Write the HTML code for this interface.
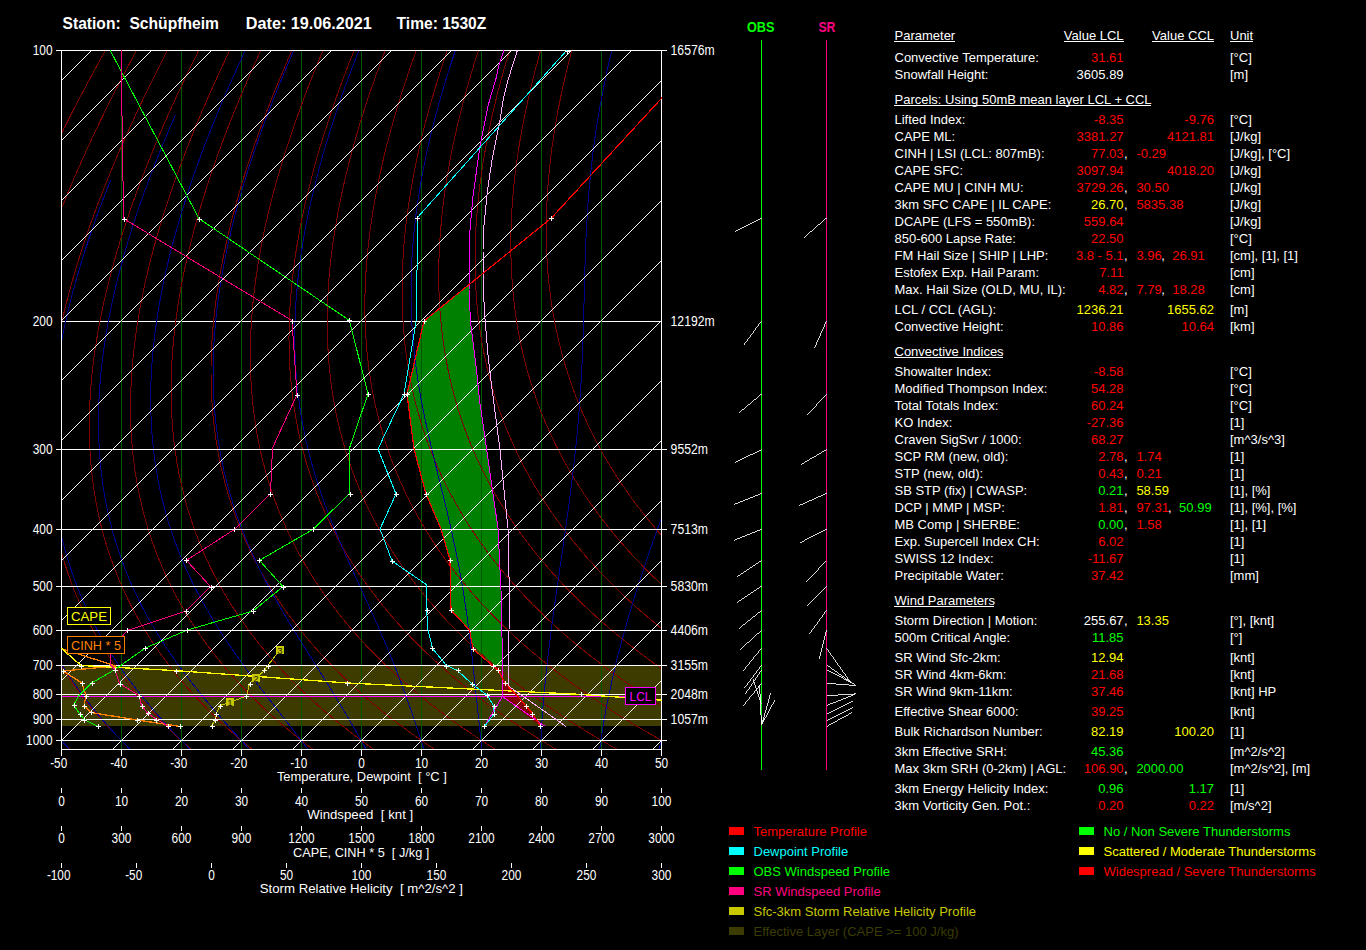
<!DOCTYPE html><html><head><meta charset="utf-8"><style>
html,body{margin:0;padding:0;background:#000;width:1366px;height:950px;overflow:hidden}
svg text{font-family:"Liberation Sans",sans-serif;white-space:pre}
</style></head><body>
<svg width="1366" height="950" viewBox="0 0 1366 950" style="position:absolute;left:0;top:0">
<defs><clipPath id="pc"><rect x="61" y="50" width="601" height="700"/></clipPath><pattern id="iso" patternUnits="userSpaceOnUse" x="0" y="0" width="60" height="60"><path d="M0,21 h1 v1 h-1 z M1,20 h1 v1 h-1 z M2,19 h1 v1 h-1 z M3,18 h1 v1 h-1 z M4,17 h1 v1 h-1 z M5,16 h1 v1 h-1 z M6,15 h1 v1 h-1 z M7,14 h1 v1 h-1 z M8,13 h1 v1 h-1 z M9,12 h1 v1 h-1 z M10,11 h1 v1 h-1 z M11,10 h1 v1 h-1 z M12,9 h1 v1 h-1 z M13,8 h1 v1 h-1 z M14,7 h1 v1 h-1 z M15,6 h1 v1 h-1 z M16,5 h1 v1 h-1 z M17,4 h1 v1 h-1 z M18,3 h1 v1 h-1 z M19,2 h1 v1 h-1 z M20,1 h1 v1 h-1 z M21,0 h1 v1 h-1 z M22,59 h1 v1 h-1 z M23,58 h1 v1 h-1 z M24,57 h1 v1 h-1 z M25,56 h1 v1 h-1 z M26,55 h1 v1 h-1 z M27,54 h1 v1 h-1 z M28,53 h1 v1 h-1 z M29,52 h1 v1 h-1 z M30,51 h1 v1 h-1 z M31,50 h1 v1 h-1 z M32,49 h1 v1 h-1 z M33,48 h1 v1 h-1 z M34,47 h1 v1 h-1 z M35,46 h1 v1 h-1 z M36,45 h1 v1 h-1 z M37,44 h1 v1 h-1 z M38,43 h1 v1 h-1 z M39,42 h1 v1 h-1 z M40,41 h1 v1 h-1 z M41,40 h1 v1 h-1 z M42,39 h1 v1 h-1 z M43,38 h1 v1 h-1 z M44,37 h1 v1 h-1 z M45,36 h1 v1 h-1 z M46,35 h1 v1 h-1 z M47,34 h1 v1 h-1 z M48,33 h1 v1 h-1 z M49,32 h1 v1 h-1 z M50,31 h1 v1 h-1 z M51,30 h1 v1 h-1 z M52,29 h1 v1 h-1 z M53,28 h1 v1 h-1 z M54,27 h1 v1 h-1 z M55,26 h1 v1 h-1 z M56,25 h1 v1 h-1 z M57,24 h1 v1 h-1 z M58,23 h1 v1 h-1 z M59,22 h1 v1 h-1 z" fill="#fff" shape-rendering="crispEdges"/></pattern></defs>
<g clip-path="url(#pc)">
<line x1="56" y1="321.5" x2="667" y2="321.5" stroke="#fff" shape-rendering="crispEdges"/>
<polygon points="469,285 424,321 407,394 414,449 426,494 441,529 450,560 451,610 469.5,630 473,649 493,666 502.5,675 502.5,666 502.5,660 501,590 498,528 493,494 485,438 479.5,400 476.5,370 470.5,322 469,290" fill="#008000"/>
<rect x="61" y="666" width="600" height="60" fill="#3d3b00"/>
<polygon points="502.5,675 505,683 516,694.5 525.5,705.5 532.5,713.5 539,724 541,726 540,726 502.5,696.5" fill="#800000"/>
<path d="M121.5,50 V749 M181.5,50 V749 M241.5,50 V749 M301.5,50 V749 M361.5,50 V749 M421.5,50 V749 M481.5,50 V749 M541.5,50 V749 M601.5,50 V749" stroke="#005800" fill="none" shape-rendering="crispEdges"/>
<path d="M118.8,26.7 L105.6,50.0 L93.6,71.8 L82.7,92.1 L72.7,111.1 L63.7,129.0 L55.4,145.9 L47.8,161.8 L40.8,176.9 L34.3,191.2 L28.4,204.9 L22.9,217.8 L17.9,230.2 L13.2,242.1 L8.9,253.4 L4.9,264.3 L1.1,274.7 L-2.3,284.7 L-5.5,294.4 L-8.5,303.6 L-11.2,312.6 L-13.7,321.2 L-16.1,329.6 L-18.3,337.6 L-20.3,345.5 L-22.2,353.0 L-23.9,360.3 L-25.5,367.5 L-27.0,374.4 L-28.4,381.1 L-29.6,387.6 L-30.8,393.9 L-31.8,400.1 L-32.8,406.1 L-33.7,411.9 L-34.5,417.6 L-35.2,423.2 L-35.8,428.6 L-36.4,433.9 L-36.9,439.0 L-37.3,444.1 L-37.7,449.0 L-38.0,453.9 L-38.3,458.6 L-38.6,463.2 L-38.7,467.7 L-38.9,472.1 L-38.9,476.5 L-39.0,480.7 L-39.0,484.9 L-39.0,488.9 L-38.9,492.9 L-38.8,496.9 L-38.7,500.7 L-38.5,504.5 L-38.3,508.2 L-38.1,511.9 L-37.8,515.4 L-37.5,519.0 L-37.2,522.4 L-36.9,525.8 L-36.6,529.2 L-36.2,532.5 L-35.8,535.7 L-35.4,538.9 L-34.9,542.0 L-34.5,545.1 L-34.0,548.1 L-33.5,551.1 L-33.0,554.1 L-32.5,557.0 L-31.9,559.8 L-31.4,562.6 L-30.8,565.4 L-30.2,568.1 L-29.6,570.8 L-29.0,573.5 L-28.4,576.1 L-27.8,578.7 L-27.1,581.3 L-26.5,583.8 L-25.8,586.3 L-25.1,588.7 L-24.4,591.1 L-23.7,593.5 L-23.0,595.9 L-22.3,598.2 L-21.6,600.5 L-20.9,602.8 L-20.1,605.0 L-19.4,607.2 L-18.6,609.4 L-17.9,611.6 L-17.1,613.7 L-16.4,615.8 L-15.6,617.9 L-14.8,620.0 L-14.0,622.0 L-13.2,624.1 L-12.4,626.0 L-11.6,628.0 L-10.8,630.0 L-10.0,631.9 L-9.2,633.8 L-8.3,635.7 L-7.5,637.6 L-6.7,639.4 L-5.8,641.3 L-5.0,643.1 L-4.1,644.9 L-3.3,646.6 L-2.4,648.4 L-1.6,650.1 L-0.7,651.9 L0.1,653.6 L1.0,655.2 L1.9,656.9 L2.7,658.6 L3.6,660.2 L4.5,661.8 L5.4,663.5 L6.2,665.0 L7.1,666.6 L8.0,668.2 L8.9,669.7 L9.8,671.3 L10.7,672.8 L11.6,674.3 L12.5,675.8 L13.4,677.3 L14.2,678.8 L15.1,680.2 L16.0,681.7 L16.9,683.1 L17.9,684.5 L18.8,685.9 L19.7,687.3 L20.6,688.7 L21.5,690.1 L22.4,691.4 L23.3,692.8 L24.2,694.1 L25.1,695.4 L26.0,696.7 L26.9,698.1 L27.9,699.3 L28.8,700.6 L29.7,701.9 L30.6,703.2 L31.5,704.4 L32.4,705.7 L33.3,706.9 L34.3,708.1 L35.2,709.4 L36.1,710.6 L37.0,711.8 L37.9,712.9 L38.9,714.1 L39.8,715.3 L40.7,716.5 L41.6,717.6 L42.5,718.8 L43.5,719.9 L44.4,721.0 L45.3,722.2 L46.2,723.3 L47.1,724.4 L48.1,725.5 L49.0,726.6 L49.9,727.6 L50.8,728.7 L51.7,729.8 L52.7,730.8 L53.6,731.9 L54.5,732.9 L55.4,734.0 L56.3,735.0 L57.3,736.0 L58.2,737.1 L59.1,738.1 L60.0,739.1 L60.9,740.1 L61.9,741.1 L62.8,742.0 L63.7,743.0 L64.6,744.0 L65.5,745.0 L66.4,745.9 L67.4,746.9 L68.3,747.8 L69.2,748.8 L70.1,749.7 L71.0,750.6 L71.9,751.5 L72.8,752.5 L73.8,753.4 L74.7,754.3 L75.6,755.2 L76.5,756.1 L77.4,757.0 L78.3,757.9 M149.5,26.7 L136.7,50.0 L125.1,71.8 L114.6,92.1 L105.1,111.1 L96.4,129.0 L88.5,145.9 L81.3,161.8 L74.6,176.9 L68.6,191.2 L63.0,204.9 L57.8,217.8 L53.1,230.2 L48.7,242.1 L44.7,253.4 L41.0,264.3 L37.6,274.7 L34.5,284.7 L31.6,294.4 L28.9,303.6 L26.4,312.6 L24.1,321.2 L22.0,329.6 L20.1,337.6 L18.4,345.5 L16.7,353.0 L15.2,360.3 L13.9,367.5 L12.7,374.4 L11.5,381.1 L10.5,387.6 L9.6,393.9 L8.8,400.1 L8.0,406.1 L7.4,411.9 L6.8,417.6 L6.3,423.2 L5.9,428.6 L5.5,433.9 L5.2,439.0 L5.0,444.1 L4.8,449.0 L4.7,453.9 L4.6,458.6 L4.6,463.2 L4.6,467.7 L4.7,472.1 L4.8,476.5 L4.9,480.7 L5.1,484.9 L5.3,488.9 L5.6,492.9 L5.8,496.9 L6.1,500.7 L6.5,504.5 L6.9,508.2 L7.3,511.9 L7.7,515.4 L8.1,519.0 L8.6,522.4 L9.1,525.8 L9.6,529.2 L10.2,532.5 L10.7,535.7 L11.3,538.9 L11.9,542.0 L12.5,545.1 L13.2,548.1 L13.8,551.1 L14.5,554.1 L15.1,557.0 L15.8,559.8 L16.5,562.6 L17.3,565.4 L18.0,568.1 L18.7,570.8 L19.5,573.5 L20.3,576.1 L21.0,578.7 L21.8,581.3 L22.6,583.8 L23.4,586.3 L24.2,588.7 L25.1,591.1 L25.9,593.5 L26.7,595.9 L27.6,598.2 L28.4,600.5 L29.3,602.8 L30.2,605.0 L31.1,607.2 L31.9,609.4 L32.8,611.6 L33.7,613.7 L34.6,615.8 L35.5,617.9 L36.4,620.0 L37.4,622.0 L38.3,624.1 L39.2,626.0 L40.1,628.0 L41.1,630.0 L42.0,631.9 L42.9,633.8 L43.9,635.7 L44.8,637.6 L45.8,639.4 L46.8,641.3 L47.7,643.1 L48.7,644.9 L49.6,646.6 L50.6,648.4 L51.6,650.1 L52.6,651.9 L53.5,653.6 L54.5,655.2 L55.5,656.9 L56.5,658.6 L57.5,660.2 L58.4,661.8 L59.4,663.5 L60.4,665.0 L61.4,666.6 L62.4,668.2 L63.4,669.7 L64.4,671.3 L65.4,672.8 L66.4,674.3 L67.4,675.8 L68.4,677.3 L69.4,678.8 L70.4,680.2 L71.4,681.7 L72.4,683.1 L73.4,684.5 L74.4,685.9 L75.4,687.3 L76.5,688.7 L77.5,690.1 L78.5,691.4 L79.5,692.8 L80.5,694.1 L81.5,695.4 L82.5,696.7 L83.5,698.1 L84.5,699.3 L85.6,700.6 L86.6,701.9 L87.6,703.2 L88.6,704.4 L89.6,705.7 L90.6,706.9 L91.6,708.1 L92.6,709.4 L93.7,710.6 L94.7,711.8 L95.7,712.9 L96.7,714.1 L97.7,715.3 L98.7,716.5 L99.7,717.6 L100.8,718.8 L101.8,719.9 L102.8,721.0 L103.8,722.2 L104.8,723.3 L105.8,724.4 L106.8,725.5 L107.8,726.6 L108.8,727.6 L109.9,728.7 L110.9,729.8 L111.9,730.8 L112.9,731.9 L113.9,732.9 L114.9,734.0 L115.9,735.0 L116.9,736.0 L117.9,737.1 L118.9,738.1 L119.9,739.1 L120.9,740.1 L121.9,741.1 L122.9,742.0 L123.9,743.0 L124.9,744.0 L125.9,745.0 L126.9,745.9 L127.9,746.9 L128.9,747.8 L129.9,748.8 L130.9,749.7 L131.9,750.6 L132.9,751.5 L133.9,752.5 L134.9,753.4 L135.9,754.3 L136.9,755.2 L137.9,756.1 L138.9,757.0 L139.9,757.9 M180.1,26.7 L167.7,50.0 L156.6,71.8 L146.5,92.1 L137.4,111.1 L129.2,129.0 L121.6,145.9 L114.8,161.8 L108.5,176.9 L102.8,191.2 L97.5,204.9 L92.7,217.8 L88.3,230.2 L84.3,242.1 L80.6,253.4 L77.2,264.3 L74.1,274.7 L71.2,284.7 L68.6,294.4 L66.2,303.6 L64.0,312.6 L62.0,321.2 L60.2,329.6 L58.5,337.6 L57.0,345.5 L55.7,353.0 L54.4,360.3 L53.3,367.5 L52.3,374.4 L51.4,381.1 L50.7,387.6 L50.0,393.9 L49.4,400.1 L48.9,406.1 L48.4,411.9 L48.1,417.6 L47.8,423.2 L47.6,428.6 L47.5,433.9 L47.4,439.0 L47.3,444.1 L47.4,449.0 L47.4,453.9 L47.5,458.6 L47.7,463.2 L47.9,467.7 L48.2,472.1 L48.5,476.5 L48.8,480.7 L49.2,484.9 L49.6,488.9 L50.0,492.9 L50.5,496.9 L51.0,500.7 L51.5,504.5 L52.0,508.2 L52.6,511.9 L53.2,515.4 L53.8,519.0 L54.5,522.4 L55.1,525.8 L55.8,529.2 L56.5,532.5 L57.2,535.7 L58.0,538.9 L58.7,542.0 L59.5,545.1 L60.3,548.1 L61.1,551.1 L61.9,554.1 L62.7,557.0 L63.6,559.8 L64.4,562.6 L65.3,565.4 L66.2,568.1 L67.1,570.8 L68.0,573.5 L68.9,576.1 L69.8,578.7 L70.8,581.3 L71.7,583.8 L72.6,586.3 L73.6,588.7 L74.6,591.1 L75.5,593.5 L76.5,595.9 L77.5,598.2 L78.5,600.5 L79.5,602.8 L80.5,605.0 L81.5,607.2 L82.5,609.4 L83.5,611.6 L84.6,613.7 L85.6,615.8 L86.6,617.9 L87.7,620.0 L88.7,622.0 L89.8,624.1 L90.8,626.0 L91.9,628.0 L92.9,630.0 L94.0,631.9 L95.0,633.8 L96.1,635.7 L97.2,637.6 L98.3,639.4 L99.3,641.3 L100.4,643.1 L101.5,644.9 L102.6,646.6 L103.7,648.4 L104.8,650.1 L105.8,651.9 L106.9,653.6 L108.0,655.2 L109.1,656.9 L110.2,658.6 L111.3,660.2 L112.4,661.8 L113.5,663.5 L114.6,665.0 L115.7,666.6 L116.8,668.2 L117.9,669.7 L119.0,671.3 L120.1,672.8 L121.2,674.3 L122.4,675.8 L123.5,677.3 L124.6,678.8 L125.7,680.2 L126.8,681.7 L127.9,683.1 L129.0,684.5 L130.1,685.9 L131.2,687.3 L132.3,688.7 L133.5,690.1 L134.6,691.4 L135.7,692.8 L136.8,694.1 L137.9,695.4 L139.0,696.7 L140.1,698.1 L141.2,699.3 L142.3,700.6 L143.5,701.9 L144.6,703.2 L145.7,704.4 L146.8,705.7 L147.9,706.9 L149.0,708.1 L150.1,709.4 L151.2,710.6 L152.3,711.8 L153.4,712.9 L154.6,714.1 L155.7,715.3 L156.8,716.5 L157.9,717.6 L159.0,718.8 L160.1,719.9 L161.2,721.0 L162.3,722.2 L163.4,723.3 L164.5,724.4 L165.6,725.5 L166.7,726.6 L167.8,727.6 L168.9,728.7 L170.0,729.8 L171.1,730.8 L172.2,731.9 L173.3,732.9 L174.4,734.0 L175.5,735.0 L176.6,736.0 L177.7,737.1 L178.8,738.1 L179.8,739.1 L180.9,740.1 L182.0,741.1 L183.1,742.0 L184.2,743.0 L185.3,744.0 L186.4,745.0 L187.5,745.9 L188.5,746.9 L189.6,747.8 L190.7,748.8 L191.8,749.7 L192.9,750.6 L193.9,751.5 L195.0,752.5 L196.1,753.4 L197.2,754.3 L198.2,755.2 L199.3,756.1 L200.4,757.0 L201.5,757.9 M210.7,26.7 L198.8,50.0 L188.1,71.8 L178.5,92.1 L169.8,111.1 L161.9,129.0 L154.8,145.9 L148.3,161.8 L142.4,176.9 L137.0,191.2 L132.1,204.9 L127.6,217.8 L123.5,230.2 L119.8,242.1 L116.4,253.4 L113.4,264.3 L110.5,274.7 L108.0,284.7 L105.7,294.4 L103.5,303.6 L101.6,312.6 L99.9,321.2 L98.3,329.6 L97.0,337.6 L95.7,345.5 L94.6,353.0 L93.6,360.3 L92.7,367.5 L92.0,374.4 L91.4,381.1 L90.8,387.6 L90.4,393.9 L90.0,400.1 L89.7,406.1 L89.5,411.9 L89.4,417.6 L89.3,423.2 L89.3,428.6 L89.4,433.9 L89.5,439.0 L89.7,444.1 L89.9,449.0 L90.2,453.9 L90.5,458.6 L90.9,463.2 L91.3,467.7 L91.7,472.1 L92.2,476.5 L92.7,480.7 L93.3,484.9 L93.8,488.9 L94.5,492.9 L95.1,496.9 L95.8,500.7 L96.5,504.5 L97.2,508.2 L97.9,511.9 L98.7,515.4 L99.5,519.0 L100.3,522.4 L101.1,525.8 L102.0,529.2 L102.9,532.5 L103.7,535.7 L104.6,538.9 L105.6,542.0 L106.5,545.1 L107.4,548.1 L108.4,551.1 L109.4,554.1 L110.4,557.0 L111.4,559.8 L112.4,562.6 L113.4,565.4 L114.4,568.1 L115.4,570.8 L116.5,573.5 L117.6,576.1 L118.6,578.7 L119.7,581.3 L120.8,583.8 L121.9,586.3 L123.0,588.7 L124.1,591.1 L125.2,593.5 L126.3,595.9 L127.4,598.2 L128.5,600.5 L129.7,602.8 L130.8,605.0 L131.9,607.2 L133.1,609.4 L134.2,611.6 L135.4,613.7 L136.6,615.8 L137.7,617.9 L138.9,620.0 L140.1,622.0 L141.2,624.1 L142.4,626.0 L143.6,628.0 L144.8,630.0 L146.0,631.9 L147.1,633.8 L148.3,635.7 L149.5,637.6 L150.7,639.4 L151.9,641.3 L153.1,643.1 L154.3,644.9 L155.5,646.6 L156.7,648.4 L157.9,650.1 L159.1,651.9 L160.3,653.6 L161.5,655.2 L162.7,656.9 L164.0,658.6 L165.2,660.2 L166.4,661.8 L167.6,663.5 L168.8,665.0 L170.0,666.6 L171.2,668.2 L172.4,669.7 L173.7,671.3 L174.9,672.8 L176.1,674.3 L177.3,675.8 L178.5,677.3 L179.7,678.8 L180.9,680.2 L182.2,681.7 L183.4,683.1 L184.6,684.5 L185.8,685.9 L187.0,687.3 L188.2,688.7 L189.4,690.1 L190.7,691.4 L191.9,692.8 L193.1,694.1 L194.3,695.4 L195.5,696.7 L196.7,698.1 L197.9,699.3 L199.1,700.6 L200.3,701.9 L201.6,703.2 L202.8,704.4 L204.0,705.7 L205.2,706.9 L206.4,708.1 L207.6,709.4 L208.8,710.6 L210.0,711.8 L211.2,712.9 L212.4,714.1 L213.6,715.3 L214.8,716.5 L216.0,717.6 L217.2,718.8 L218.4,719.9 L219.6,721.0 L220.8,722.2 L222.0,723.3 L223.2,724.4 L224.4,725.5 L225.6,726.6 L226.7,727.6 L227.9,728.7 L229.1,729.8 L230.3,730.8 L231.5,731.9 L232.7,732.9 L233.9,734.0 L235.0,735.0 L236.2,736.0 L237.4,737.1 L238.6,738.1 L239.8,739.1 L240.9,740.1 L242.1,741.1 L243.3,742.0 L244.5,743.0 L245.6,744.0 L246.8,745.0 L248.0,745.9 L249.1,746.9 L250.3,747.8 L251.5,748.8 L252.6,749.7 L253.8,750.6 L254.9,751.5 L256.1,752.5 L257.3,753.4 L258.4,754.3 L259.6,755.2 L260.7,756.1 L261.9,757.0 L263.0,757.9 M241.3,26.7 L229.9,50.0 L219.6,71.8 L210.4,92.1 L202.1,111.1 L194.6,129.0 L187.9,145.9 L181.8,161.8 L176.2,176.9 L171.2,191.2 L166.6,204.9 L162.5,217.8 L158.8,230.2 L155.4,242.1 L152.3,253.4 L149.5,264.3 L147.0,274.7 L144.7,284.7 L142.7,294.4 L140.9,303.6 L139.2,312.6 L137.8,321.2 L136.5,329.6 L135.4,337.6 L134.4,345.5 L133.5,353.0 L132.8,360.3 L132.2,367.5 L131.7,374.4 L131.3,381.1 L131.0,387.6 L130.7,393.9 L130.6,400.1 L130.5,406.1 L130.6,411.9 L130.6,417.6 L130.8,423.2 L131.0,428.6 L131.3,433.9 L131.6,439.0 L132.0,444.1 L132.4,449.0 L132.9,453.9 L133.4,458.6 L134.0,463.2 L134.6,467.7 L135.2,472.1 L135.9,476.5 L136.6,480.7 L137.3,484.9 L138.1,488.9 L138.9,492.9 L139.7,496.9 L140.6,500.7 L141.5,504.5 L142.4,508.2 L143.3,511.9 L144.2,515.4 L145.2,519.0 L146.2,522.4 L147.2,525.8 L148.2,529.2 L149.2,532.5 L150.3,535.7 L151.3,538.9 L152.4,542.0 L153.5,545.1 L154.6,548.1 L155.7,551.1 L156.8,554.1 L158.0,557.0 L159.1,559.8 L160.3,562.6 L161.4,565.4 L162.6,568.1 L163.8,570.8 L165.0,573.5 L166.2,576.1 L167.4,578.7 L168.6,581.3 L169.9,583.8 L171.1,586.3 L172.3,588.7 L173.6,591.1 L174.8,593.5 L176.1,595.9 L177.3,598.2 L178.6,600.5 L179.8,602.8 L181.1,605.0 L182.4,607.2 L183.7,609.4 L185.0,611.6 L186.2,613.7 L187.5,615.8 L188.8,617.9 L190.1,620.0 L191.4,622.0 L192.7,624.1 L194.0,626.0 L195.3,628.0 L196.6,630.0 L197.9,631.9 L199.2,633.8 L200.6,635.7 L201.9,637.6 L203.2,639.4 L204.5,641.3 L205.8,643.1 L207.1,644.9 L208.4,646.6 L209.8,648.4 L211.1,650.1 L212.4,651.9 L213.7,653.6 L215.1,655.2 L216.4,656.9 L217.7,658.6 L219.0,660.2 L220.3,661.8 L221.7,663.5 L223.0,665.0 L224.3,666.6 L225.6,668.2 L227.0,669.7 L228.3,671.3 L229.6,672.8 L230.9,674.3 L232.2,675.8 L233.6,677.3 L234.9,678.8 L236.2,680.2 L237.5,681.7 L238.8,683.1 L240.2,684.5 L241.5,685.9 L242.8,687.3 L244.1,688.7 L245.4,690.1 L246.8,691.4 L248.1,692.8 L249.4,694.1 L250.7,695.4 L252.0,696.7 L253.3,698.1 L254.6,699.3 L255.9,700.6 L257.2,701.9 L258.5,703.2 L259.8,704.4 L261.2,705.7 L262.5,706.9 L263.8,708.1 L265.1,709.4 L266.4,710.6 L267.7,711.8 L269.0,712.9 L270.2,714.1 L271.5,715.3 L272.8,716.5 L274.1,717.6 L275.4,718.8 L276.7,719.9 L278.0,721.0 L279.3,722.2 L280.6,723.3 L281.8,724.4 L283.1,725.5 L284.4,726.6 L285.7,727.6 L287.0,728.7 L288.2,729.8 L289.5,730.8 L290.8,731.9 L292.1,732.9 L293.3,734.0 L294.6,735.0 L295.9,736.0 L297.1,737.1 L298.4,738.1 L299.7,739.1 L300.9,740.1 L302.2,741.1 L303.5,742.0 L304.7,743.0 L306.0,744.0 L307.2,745.0 L308.5,745.9 L309.7,746.9 L311.0,747.8 L312.2,748.8 L313.5,749.7 L314.7,750.6 L316.0,751.5 L317.2,752.5 L318.4,753.4 L319.7,754.3 L320.9,755.2 L322.2,756.1 L323.4,757.0 L324.6,757.9 M272.0,26.7 L261.0,50.0 L251.1,71.8 L242.4,92.1 L234.5,111.1 L227.4,129.0 L221.0,145.9 L215.3,161.8 L210.1,176.9 L205.4,191.2 L201.2,204.9 L197.4,217.8 L194.0,230.2 L190.9,242.1 L188.2,253.4 L185.7,264.3 L183.5,274.7 L181.5,284.7 L179.8,294.4 L178.2,303.6 L176.9,312.6 L175.7,321.2 L174.7,329.6 L173.8,337.6 L173.1,345.5 L172.5,353.0 L172.0,360.3 L171.6,367.5 L171.3,374.4 L171.2,381.1 L171.1,387.6 L171.1,393.9 L171.2,400.1 L171.4,406.1 L171.6,411.9 L171.9,417.6 L172.3,423.2 L172.7,428.6 L173.2,433.9 L173.7,439.0 L174.3,444.1 L175.0,449.0 L175.6,453.9 L176.4,458.6 L177.1,463.2 L177.9,467.7 L178.7,472.1 L179.6,476.5 L180.5,480.7 L181.4,484.9 L182.4,488.9 L183.4,492.9 L184.4,496.9 L185.4,500.7 L186.4,504.5 L187.5,508.2 L188.6,511.9 L189.7,515.4 L190.9,519.0 L192.0,522.4 L193.2,525.8 L194.4,529.2 L195.5,532.5 L196.8,535.7 L198.0,538.9 L199.2,542.0 L200.5,545.1 L201.7,548.1 L203.0,551.1 L204.3,554.1 L205.6,557.0 L206.9,559.8 L208.2,562.6 L209.5,565.4 L210.8,568.1 L212.2,570.8 L213.5,573.5 L214.9,576.1 L216.2,578.7 L217.6,581.3 L218.9,583.8 L220.3,586.3 L221.7,588.7 L223.1,591.1 L224.4,593.5 L225.8,595.9 L227.2,598.2 L228.6,600.5 L230.0,602.8 L231.4,605.0 L232.8,607.2 L234.3,609.4 L235.7,611.6 L237.1,613.7 L238.5,615.8 L239.9,617.9 L241.3,620.0 L242.8,622.0 L244.2,624.1 L245.6,626.0 L247.0,628.0 L248.5,630.0 L249.9,631.9 L251.3,633.8 L252.8,635.7 L254.2,637.6 L255.6,639.4 L257.1,641.3 L258.5,643.1 L259.9,644.9 L261.4,646.6 L262.8,648.4 L264.3,650.1 L265.7,651.9 L267.1,653.6 L268.6,655.2 L270.0,656.9 L271.4,658.6 L272.9,660.2 L274.3,661.8 L275.7,663.5 L277.2,665.0 L278.6,666.6 L280.0,668.2 L281.5,669.7 L282.9,671.3 L284.3,672.8 L285.8,674.3 L287.2,675.8 L288.6,677.3 L290.0,678.8 L291.5,680.2 L292.9,681.7 L294.3,683.1 L295.7,684.5 L297.2,685.9 L298.6,687.3 L300.0,688.7 L301.4,690.1 L302.8,691.4 L304.3,692.8 L305.7,694.1 L307.1,695.4 L308.5,696.7 L309.9,698.1 L311.3,699.3 L312.7,700.6 L314.1,701.9 L315.5,703.2 L316.9,704.4 L318.3,705.7 L319.7,706.9 L321.1,708.1 L322.5,709.4 L323.9,710.6 L325.3,711.8 L326.7,712.9 L328.1,714.1 L329.5,715.3 L330.9,716.5 L332.3,717.6 L333.6,718.8 L335.0,719.9 L336.4,721.0 L337.8,722.2 L339.2,723.3 L340.5,724.4 L341.9,725.5 L343.3,726.6 L344.6,727.6 L346.0,728.7 L347.4,729.8 L348.7,730.8 L350.1,731.9 L351.5,732.9 L352.8,734.0 L354.2,735.0 L355.5,736.0 L356.9,737.1 L358.2,738.1 L359.6,739.1 L360.9,740.1 L362.3,741.1 L363.6,742.0 L365.0,743.0 L366.3,744.0 L367.6,745.0 L369.0,745.9 L370.3,746.9 L371.6,747.8 L373.0,748.8 L374.3,749.7 L375.6,750.6 L377.0,751.5 L378.3,752.5 L379.6,753.4 L380.9,754.3 L382.2,755.2 L383.6,756.1 L384.9,757.0 L386.2,757.9 M302.6,26.7 L292.0,50.0 L282.7,71.8 L274.3,92.1 L266.8,111.1 L260.1,129.0 L254.1,145.9 L248.8,161.8 L243.9,176.9 L239.6,191.2 L235.8,204.9 L232.3,217.8 L229.2,230.2 L226.5,242.1 L224.0,253.4 L221.9,264.3 L219.9,274.7 L218.3,284.7 L216.8,294.4 L215.5,303.6 L214.5,312.6 L213.6,321.2 L212.8,329.6 L212.2,337.6 L211.7,345.5 L211.4,353.0 L211.1,360.3 L211.0,367.5 L211.0,374.4 L211.1,381.1 L211.2,387.6 L211.5,393.9 L211.8,400.1 L212.2,406.1 L212.7,411.9 L213.2,417.6 L213.8,423.2 L214.4,428.6 L215.1,433.9 L215.9,439.0 L216.7,444.1 L217.5,449.0 L218.4,453.9 L219.3,458.6 L220.3,463.2 L221.2,467.7 L222.3,472.1 L223.3,476.5 L224.4,480.7 L225.5,484.9 L226.6,488.9 L227.8,492.9 L229.0,496.9 L230.2,500.7 L231.4,504.5 L232.7,508.2 L233.9,511.9 L235.2,515.4 L236.5,519.0 L237.9,522.4 L239.2,525.8 L240.5,529.2 L241.9,532.5 L243.3,535.7 L244.7,538.9 L246.0,542.0 L247.5,545.1 L248.9,548.1 L250.3,551.1 L251.7,554.1 L253.2,557.0 L254.6,559.8 L256.1,562.6 L257.6,565.4 L259.0,568.1 L260.5,570.8 L262.0,573.5 L263.5,576.1 L265.0,578.7 L266.5,581.3 L268.0,583.8 L269.5,586.3 L271.0,588.7 L272.6,591.1 L274.1,593.5 L275.6,595.9 L277.1,598.2 L278.7,600.5 L280.2,602.8 L281.7,605.0 L283.3,607.2 L284.8,609.4 L286.4,611.6 L287.9,613.7 L289.5,615.8 L291.0,617.9 L292.6,620.0 L294.1,622.0 L295.7,624.1 L297.2,626.0 L298.8,628.0 L300.3,630.0 L301.9,631.9 L303.4,633.8 L305.0,635.7 L306.5,637.6 L308.1,639.4 L309.7,641.3 L311.2,643.1 L312.8,644.9 L314.3,646.6 L315.9,648.4 L317.4,650.1 L319.0,651.9 L320.5,653.6 L322.1,655.2 L323.6,656.9 L325.2,658.6 L326.7,660.2 L328.3,661.8 L329.8,663.5 L331.4,665.0 L332.9,666.6 L334.4,668.2 L336.0,669.7 L337.5,671.3 L339.1,672.8 L340.6,674.3 L342.1,675.8 L343.7,677.3 L345.2,678.8 L346.7,680.2 L348.3,681.7 L349.8,683.1 L351.3,684.5 L352.9,685.9 L354.4,687.3 L355.9,688.7 L357.4,690.1 L358.9,691.4 L360.5,692.8 L362.0,694.1 L363.5,695.4 L365.0,696.7 L366.5,698.1 L368.0,699.3 L369.5,700.6 L371.0,701.9 L372.5,703.2 L374.0,704.4 L375.5,705.7 L377.0,706.9 L378.5,708.1 L380.0,709.4 L381.5,710.6 L383.0,711.8 L384.5,712.9 L385.9,714.1 L387.4,715.3 L388.9,716.5 L390.4,717.6 L391.9,718.8 L393.3,719.9 L394.8,721.0 L396.3,722.2 L397.7,723.3 L399.2,724.4 L400.7,725.5 L402.1,726.6 L403.6,727.6 L405.0,728.7 L406.5,729.8 L408.0,730.8 L409.4,731.9 L410.9,732.9 L412.3,734.0 L413.7,735.0 L415.2,736.0 L416.6,737.1 L418.1,738.1 L419.5,739.1 L420.9,740.1 L422.4,741.1 L423.8,742.0 L425.2,743.0 L426.6,744.0 L428.1,745.0 L429.5,745.9 L430.9,746.9 L432.3,747.8 L433.7,748.8 L435.2,749.7 L436.6,750.6 L438.0,751.5 L439.4,752.5 L440.8,753.4 L442.2,754.3 L443.6,755.2 L445.0,756.1 L446.4,757.0 L447.8,757.9 M333.2,26.7 L323.1,50.0 L314.2,71.8 L306.2,92.1 L299.2,111.1 L292.9,129.0 L287.3,145.9 L282.3,161.8 L277.8,176.9 L273.8,191.2 L270.3,204.9 L267.2,217.8 L264.4,230.2 L262.0,242.1 L259.9,253.4 L258.0,264.3 L256.4,274.7 L255.0,284.7 L253.9,294.4 L252.9,303.6 L252.1,312.6 L251.4,321.2 L251.0,329.6 L250.6,337.6 L250.4,345.5 L250.3,353.0 L250.3,360.3 L250.5,367.5 L250.7,374.4 L251.0,381.1 L251.4,387.6 L251.9,393.9 L252.4,400.1 L253.0,406.1 L253.7,411.9 L254.5,417.6 L255.3,423.2 L256.1,428.6 L257.0,433.9 L258.0,439.0 L259.0,444.1 L260.0,449.0 L261.1,453.9 L262.2,458.6 L263.4,463.2 L264.6,467.7 L265.8,472.1 L267.0,476.5 L268.3,480.7 L269.6,484.9 L270.9,488.9 L272.3,492.9 L273.6,496.9 L275.0,500.7 L276.4,504.5 L277.8,508.2 L279.3,511.9 L280.7,515.4 L282.2,519.0 L283.7,522.4 L285.2,525.8 L286.7,529.2 L288.2,532.5 L289.8,535.7 L291.3,538.9 L292.9,542.0 L294.4,545.1 L296.0,548.1 L297.6,551.1 L299.2,554.1 L300.8,557.0 L302.4,559.8 L304.0,562.6 L305.6,565.4 L307.3,568.1 L308.9,570.8 L310.5,573.5 L312.2,576.1 L313.8,578.7 L315.4,581.3 L317.1,583.8 L318.7,586.3 L320.4,588.7 L322.1,591.1 L323.7,593.5 L325.4,595.9 L327.1,598.2 L328.7,600.5 L330.4,602.8 L332.1,605.0 L333.7,607.2 L335.4,609.4 L337.1,611.6 L338.8,613.7 L340.4,615.8 L342.1,617.9 L343.8,620.0 L345.5,622.0 L347.1,624.1 L348.8,626.0 L350.5,628.0 L352.2,630.0 L353.9,631.9 L355.5,633.8 L357.2,635.7 L358.9,637.6 L360.6,639.4 L362.2,641.3 L363.9,643.1 L365.6,644.9 L367.3,646.6 L368.9,648.4 L370.6,650.1 L372.3,651.9 L373.9,653.6 L375.6,655.2 L377.3,656.9 L378.9,658.6 L380.6,660.2 L382.2,661.8 L383.9,663.5 L385.5,665.0 L387.2,666.6 L388.9,668.2 L390.5,669.7 L392.2,671.3 L393.8,672.8 L395.4,674.3 L397.1,675.8 L398.7,677.3 L400.4,678.8 L402.0,680.2 L403.6,681.7 L405.3,683.1 L406.9,684.5 L408.5,685.9 L410.2,687.3 L411.8,688.7 L413.4,690.1 L415.0,691.4 L416.6,692.8 L418.3,694.1 L419.9,695.4 L421.5,696.7 L423.1,698.1 L424.7,699.3 L426.3,700.6 L427.9,701.9 L429.5,703.2 L431.1,704.4 L432.7,705.7 L434.3,706.9 L435.9,708.1 L437.5,709.4 L439.1,710.6 L440.6,711.8 L442.2,712.9 L443.8,714.1 L445.4,715.3 L446.9,716.5 L448.5,717.6 L450.1,718.8 L451.6,719.9 L453.2,721.0 L454.8,722.2 L456.3,723.3 L457.9,724.4 L459.4,725.5 L461.0,726.6 L462.5,727.6 L464.1,728.7 L465.6,729.8 L467.2,730.8 L468.7,731.9 L470.2,732.9 L471.8,734.0 L473.3,735.0 L474.8,736.0 L476.4,737.1 L477.9,738.1 L479.4,739.1 L480.9,740.1 L482.4,741.1 L484.0,742.0 L485.5,743.0 L487.0,744.0 L488.5,745.0 L490.0,745.9 L491.5,746.9 L493.0,747.8 L494.5,748.8 L496.0,749.7 L497.5,750.6 L499.0,751.5 L500.5,752.5 L502.0,753.4 L503.4,754.3 L504.9,755.2 L506.4,756.1 L507.9,757.0 L509.3,757.9 M363.8,26.7 L354.2,50.0 L345.7,71.8 L338.2,92.1 L331.5,111.1 L325.6,129.0 L320.4,145.9 L315.7,161.8 L311.7,176.9 L308.1,191.2 L304.9,204.9 L302.1,217.8 L299.7,230.2 L297.6,242.1 L295.7,253.4 L294.2,264.3 L292.9,274.7 L291.8,284.7 L290.9,294.4 L290.2,303.6 L289.7,312.6 L289.3,321.2 L289.1,329.6 L289.0,337.6 L289.1,345.5 L289.2,353.0 L289.5,360.3 L289.9,367.5 L290.3,374.4 L290.9,381.1 L291.5,387.6 L292.2,393.9 L293.0,400.1 L293.9,406.1 L294.8,411.9 L295.8,417.6 L296.8,423.2 L297.8,428.6 L299.0,433.9 L300.1,439.0 L301.3,444.1 L302.6,449.0 L303.9,453.9 L305.2,458.6 L306.5,463.2 L307.9,467.7 L309.3,472.1 L310.7,476.5 L312.2,480.7 L313.7,484.9 L315.2,488.9 L316.7,492.9 L318.3,496.9 L319.8,500.7 L321.4,504.5 L323.0,508.2 L324.6,511.9 L326.3,515.4 L327.9,519.0 L329.5,522.4 L331.2,525.8 L332.9,529.2 L334.6,532.5 L336.3,535.7 L338.0,538.9 L339.7,542.0 L341.4,545.1 L343.2,548.1 L344.9,551.1 L346.6,554.1 L348.4,557.0 L350.2,559.8 L351.9,562.6 L353.7,565.4 L355.5,568.1 L357.2,570.8 L359.0,573.5 L360.8,576.1 L362.6,578.7 L364.4,581.3 L366.2,583.8 L368.0,586.3 L369.8,588.7 L371.6,591.1 L373.4,593.5 L375.2,595.9 L377.0,598.2 L378.8,600.5 L380.6,602.8 L382.4,605.0 L384.2,607.2 L386.0,609.4 L387.8,611.6 L389.6,613.7 L391.4,615.8 L393.2,617.9 L395.0,620.0 L396.8,622.0 L398.6,624.1 L400.4,626.0 L402.2,628.0 L404.0,630.0 L405.8,631.9 L407.6,633.8 L409.4,635.7 L411.2,637.6 L413.0,639.4 L414.8,641.3 L416.6,643.1 L418.4,644.9 L420.2,646.6 L422.0,648.4 L423.8,650.1 L425.5,651.9 L427.3,653.6 L429.1,655.2 L430.9,656.9 L432.7,658.6 L434.4,660.2 L436.2,661.8 L438.0,663.5 L439.7,665.0 L441.5,666.6 L443.3,668.2 L445.0,669.7 L446.8,671.3 L448.5,672.8 L450.3,674.3 L452.0,675.8 L453.8,677.3 L455.5,678.8 L457.3,680.2 L459.0,681.7 L460.8,683.1 L462.5,684.5 L464.2,685.9 L465.9,687.3 L467.7,688.7 L469.4,690.1 L471.1,691.4 L472.8,692.8 L474.6,694.1 L476.3,695.4 L478.0,696.7 L479.7,698.1 L481.4,699.3 L483.1,700.6 L484.8,701.9 L486.5,703.2 L488.2,704.4 L489.9,705.7 L491.6,706.9 L493.3,708.1 L494.9,709.4 L496.6,710.6 L498.3,711.8 L500.0,712.9 L501.6,714.1 L503.3,715.3 L505.0,716.5 L506.6,717.6 L508.3,718.8 L510.0,719.9 L511.6,721.0 L513.3,722.2 L514.9,723.3 L516.6,724.4 L518.2,725.5 L519.8,726.6 L521.5,727.6 L523.1,728.7 L524.8,729.8 L526.4,730.8 L528.0,731.9 L529.6,732.9 L531.3,734.0 L532.9,735.0 L534.5,736.0 L536.1,737.1 L537.7,738.1 L539.3,739.1 L540.9,740.1 L542.5,741.1 L544.1,742.0 L545.7,743.0 L547.3,744.0 L548.9,745.0 L550.5,745.9 L552.1,746.9 L553.7,747.8 L555.3,748.8 L556.8,749.7 L558.4,750.6 L560.0,751.5 L561.6,752.5 L563.1,753.4 L564.7,754.3 L566.3,755.2 L567.8,756.1 L569.4,757.0 L570.9,757.9 M394.5,26.7 L385.3,50.0 L377.2,71.8 L370.1,92.1 L363.8,111.1 L358.3,129.0 L353.5,145.9 L349.2,161.8 L345.5,176.9 L342.3,191.2 L339.4,204.9 L337.0,217.8 L334.9,230.2 L333.1,242.1 L331.6,253.4 L330.3,264.3 L329.3,274.7 L328.5,284.7 L328.0,294.4 L327.5,303.6 L327.3,312.6 L327.2,321.2 L327.3,329.6 L327.4,337.6 L327.8,345.5 L328.2,353.0 L328.7,360.3 L329.3,367.5 L330.0,374.4 L330.8,381.1 L331.7,387.6 L332.6,393.9 L333.6,400.1 L334.7,406.1 L335.8,411.9 L337.0,417.6 L338.3,423.2 L339.5,428.6 L340.9,433.9 L342.3,439.0 L343.7,444.1 L345.1,449.0 L346.6,453.9 L348.1,458.6 L349.7,463.2 L351.2,467.7 L352.8,472.1 L354.5,476.5 L356.1,480.7 L357.8,484.9 L359.5,488.9 L361.2,492.9 L362.9,496.9 L364.6,500.7 L366.4,504.5 L368.2,508.2 L370.0,511.9 L371.8,515.4 L373.6,519.0 L375.4,522.4 L377.2,525.8 L379.1,529.2 L380.9,532.5 L382.8,535.7 L384.7,538.9 L386.5,542.0 L388.4,545.1 L390.3,548.1 L392.2,551.1 L394.1,554.1 L396.0,557.0 L397.9,559.8 L399.8,562.6 L401.8,565.4 L403.7,568.1 L405.6,570.8 L407.5,573.5 L409.5,576.1 L411.4,578.7 L413.3,581.3 L415.2,583.8 L417.2,586.3 L419.1,588.7 L421.1,591.1 L423.0,593.5 L424.9,595.9 L426.9,598.2 L428.8,600.5 L430.8,602.8 L432.7,605.0 L434.6,607.2 L436.6,609.4 L438.5,611.6 L440.4,613.7 L442.4,615.8 L444.3,617.9 L446.2,620.0 L448.2,622.0 L450.1,624.1 L452.0,626.0 L454.0,628.0 L455.9,630.0 L457.8,631.9 L459.7,633.8 L461.6,635.7 L463.6,637.6 L465.5,639.4 L467.4,641.3 L469.3,643.1 L471.2,644.9 L473.1,646.6 L475.0,648.4 L476.9,650.1 L478.8,651.9 L480.7,653.6 L482.6,655.2 L484.5,656.9 L486.4,658.6 L488.3,660.2 L490.2,661.8 L492.0,663.5 L493.9,665.0 L495.8,666.6 L497.7,668.2 L499.5,669.7 L501.4,671.3 L503.3,672.8 L505.1,674.3 L507.0,675.8 L508.8,677.3 L510.7,678.8 L512.5,680.2 L514.4,681.7 L516.2,683.1 L518.1,684.5 L519.9,685.9 L521.7,687.3 L523.6,688.7 L525.4,690.1 L527.2,691.4 L529.0,692.8 L530.8,694.1 L532.7,695.4 L534.5,696.7 L536.3,698.1 L538.1,699.3 L539.9,700.6 L541.7,701.9 L543.5,703.2 L545.3,704.4 L547.1,705.7 L548.8,706.9 L550.6,708.1 L552.4,709.4 L554.2,710.6 L556.0,711.8 L557.7,712.9 L559.5,714.1 L561.3,715.3 L563.0,716.5 L564.8,717.6 L566.5,718.8 L568.3,719.9 L570.0,721.0 L571.8,722.2 L573.5,723.3 L575.2,724.4 L577.0,725.5 L578.7,726.6 L580.4,727.6 L582.2,728.7 L583.9,729.8 L585.6,730.8 L587.3,731.9 L589.0,732.9 L590.7,734.0 L592.4,735.0 L594.1,736.0 L595.9,737.1 L597.5,738.1 L599.2,739.1 L600.9,740.1 L602.6,741.1 L604.3,742.0 L606.0,743.0 L607.7,744.0 L609.3,745.0 L611.0,745.9 L612.7,746.9 L614.4,747.8 L616.0,748.8 L617.7,749.7 L619.3,750.6 L621.0,751.5 L622.6,752.5 L624.3,753.4 L625.9,754.3 L627.6,755.2 L629.2,756.1 L630.9,757.0 L632.5,757.9 M425.1,26.7 L416.4,50.0 L408.7,71.8 L402.0,92.1 L396.2,111.1 L391.1,129.0 L386.6,145.9 L382.7,161.8 L379.4,176.9 L376.5,191.2 L374.0,204.9 L371.9,217.8 L370.1,230.2 L368.6,242.1 L367.5,253.4 L366.5,264.3 L365.8,274.7 L365.3,284.7 L365.0,294.4 L364.9,303.6 L364.9,312.6 L365.1,321.2 L365.4,329.6 L365.9,337.6 L366.4,345.5 L367.1,353.0 L367.9,360.3 L368.7,367.5 L369.7,374.4 L370.7,381.1 L371.8,387.6 L373.0,393.9 L374.2,400.1 L375.5,406.1 L376.9,411.9 L378.3,417.6 L379.8,423.2 L381.3,428.6 L382.8,433.9 L384.4,439.0 L386.0,444.1 L387.6,449.0 L389.3,453.9 L391.0,458.6 L392.8,463.2 L394.6,467.7 L396.3,472.1 L398.2,476.5 L400.0,480.7 L401.9,484.9 L403.7,488.9 L405.6,492.9 L407.5,496.9 L409.4,500.7 L411.4,504.5 L413.3,508.2 L415.3,511.9 L417.3,515.4 L419.3,519.0 L421.2,522.4 L423.2,525.8 L425.3,529.2 L427.3,532.5 L429.3,535.7 L431.3,538.9 L433.4,542.0 L435.4,545.1 L437.5,548.1 L439.5,551.1 L441.6,554.1 L443.6,557.0 L445.7,559.8 L447.7,562.6 L449.8,565.4 L451.9,568.1 L454.0,570.8 L456.0,573.5 L458.1,576.1 L460.2,578.7 L462.3,581.3 L464.3,583.8 L466.4,586.3 L468.5,588.7 L470.6,591.1 L472.6,593.5 L474.7,595.9 L476.8,598.2 L478.9,600.5 L480.9,602.8 L483.0,605.0 L485.1,607.2 L487.1,609.4 L489.2,611.6 L491.3,613.7 L493.3,615.8 L495.4,617.9 L497.5,620.0 L499.5,622.0 L501.6,624.1 L503.6,626.0 L505.7,628.0 L507.7,630.0 L509.8,631.9 L511.8,633.8 L513.9,635.7 L515.9,637.6 L517.9,639.4 L520.0,641.3 L522.0,643.1 L524.0,644.9 L526.1,646.6 L528.1,648.4 L530.1,650.1 L532.1,651.9 L534.1,653.6 L536.1,655.2 L538.1,656.9 L540.1,658.6 L542.1,660.2 L544.1,661.8 L546.1,663.5 L548.1,665.0 L550.1,666.6 L552.1,668.2 L554.1,669.7 L556.0,671.3 L558.0,672.8 L560.0,674.3 L561.9,675.8 L563.9,677.3 L565.9,678.8 L567.8,680.2 L569.8,681.7 L571.7,683.1 L573.6,684.5 L575.6,685.9 L577.5,687.3 L579.5,688.7 L581.4,690.1 L583.3,691.4 L585.2,692.8 L587.1,694.1 L589.1,695.4 L591.0,696.7 L592.9,698.1 L594.8,699.3 L596.7,700.6 L598.6,701.9 L600.5,703.2 L602.4,704.4 L604.2,705.7 L606.1,706.9 L608.0,708.1 L609.9,709.4 L611.7,710.6 L613.6,711.8 L615.5,712.9 L617.3,714.1 L619.2,715.3 L621.0,716.5 L622.9,717.6 L624.7,718.8 L626.6,719.9 L628.4,721.0 L630.3,722.2 L632.1,723.3 L633.9,724.4 L635.7,725.5 L637.6,726.6 L639.4,727.6 L641.2,728.7 L643.0,729.8 L644.8,730.8 L646.6,731.9 L648.4,732.9 L650.2,734.0 L652.0,735.0 L653.8,736.0 L655.6,737.1 L657.4,738.1 L659.2,739.1 L660.9,740.1 L662.7,741.1 L664.5,742.0 L666.2,743.0 L668.0,744.0 L669.8,745.0 L671.5,745.9 L673.3,746.9 L675.0,747.8 L676.8,748.8 L678.5,749.7 L680.3,750.6 L682.0,751.5 L683.7,752.5 L685.5,753.4 L687.2,754.3 L688.9,755.2 L690.6,756.1 L692.4,757.0 L694.1,757.9 M455.7,26.7 L447.4,50.0 L440.2,71.8 L434.0,92.1 L428.5,111.1 L423.8,129.0 L419.7,145.9 L416.2,161.8 L413.2,176.9 L410.7,191.2 L408.6,204.9 L406.8,217.8 L405.3,230.2 L404.2,242.1 L403.3,253.4 L402.7,264.3 L402.3,274.7 L402.1,284.7 L402.1,294.4 L402.2,303.6 L402.5,312.6 L403.0,321.2 L403.6,329.6 L404.3,337.6 L405.1,345.5 L406.0,353.0 L407.1,360.3 L408.2,367.5 L409.4,374.4 L410.6,381.1 L412.0,387.6 L413.4,393.9 L414.8,400.1 L416.4,406.1 L418.0,411.9 L419.6,417.6 L421.2,423.2 L423.0,428.6 L424.7,433.9 L426.5,439.0 L428.3,444.1 L430.2,449.0 L432.1,453.9 L434.0,458.6 L435.9,463.2 L437.9,467.7 L439.9,472.1 L441.9,476.5 L443.9,480.7 L445.9,484.9 L448.0,488.9 L450.1,492.9 L452.2,496.9 L454.3,500.7 L456.4,504.5 L458.5,508.2 L460.6,511.9 L462.8,515.4 L464.9,519.0 L467.1,522.4 L469.3,525.8 L471.4,529.2 L473.6,532.5 L475.8,535.7 L478.0,538.9 L480.2,542.0 L482.4,545.1 L484.6,548.1 L486.8,551.1 L489.0,554.1 L491.2,557.0 L493.4,559.8 L495.7,562.6 L497.9,565.4 L500.1,568.1 L502.3,570.8 L504.5,573.5 L506.8,576.1 L509.0,578.7 L511.2,581.3 L513.4,583.8 L515.6,586.3 L517.8,588.7 L520.1,591.1 L522.3,593.5 L524.5,595.9 L526.7,598.2 L528.9,600.5 L531.1,602.8 L533.3,605.0 L535.5,607.2 L537.7,609.4 L539.9,611.6 L542.1,613.7 L544.3,615.8 L546.5,617.9 L548.7,620.0 L550.9,622.0 L553.1,624.1 L555.2,626.0 L557.4,628.0 L559.6,630.0 L561.8,631.9 L563.9,633.8 L566.1,635.7 L568.2,637.6 L570.4,639.4 L572.6,641.3 L574.7,643.1 L576.9,644.9 L579.0,646.6 L581.1,648.4 L583.3,650.1 L585.4,651.9 L587.5,653.6 L589.6,655.2 L591.8,656.9 L593.9,658.6 L596.0,660.2 L598.1,661.8 L600.2,663.5 L602.3,665.0 L604.4,666.6 L606.5,668.2 L608.6,669.7 L610.7,671.3 L612.7,672.8 L614.8,674.3 L616.9,675.8 L618.9,677.3 L621.0,678.8 L623.1,680.2 L625.1,681.7 L627.2,683.1 L629.2,684.5 L631.3,685.9 L633.3,687.3 L635.3,688.7 L637.4,690.1 L639.4,691.4 L641.4,692.8 L643.4,694.1 L645.5,695.4 L647.5,696.7 L649.5,698.1 L651.5,699.3 L653.5,700.6 L655.5,701.9 L657.5,703.2 L659.4,704.4 L661.4,705.7 L663.4,706.9 L665.4,708.1 L667.3,709.4 L669.3,710.6 L671.3,711.8 L673.2,712.9 L675.2,714.1 L677.1,715.3 L679.1,716.5 L681.0,717.6 L683.0,718.8 L684.9,719.9 L686.8,721.0 L688.8,722.2 L690.7,723.3 L692.6,724.4 L694.5,725.5 L696.4,726.6 L698.3,727.6 L700.2,728.7 L702.1,729.8 L704.0,730.8 L705.9,731.9 L707.8,732.9 L709.7,734.0 L711.6,735.0 L713.5,736.0 L715.3,737.1 L717.2,738.1 L719.1,739.1 L720.9,740.1 L722.8,741.1 L724.6,742.0 L726.5,743.0 L728.3,744.0 L730.2,745.0 L732.0,745.9 L733.9,746.9 L735.7,747.8 L737.5,748.8 L739.4,749.7 L741.2,750.6 L743.0,751.5 L744.8,752.5 L746.6,753.4 L748.4,754.3 L750.3,755.2 L752.1,756.1 L753.9,757.0 L755.6,757.9 M486.3,26.7 L478.5,50.0 L471.7,71.8 L465.9,92.1 L460.9,111.1 L456.6,129.0 L452.9,145.9 L449.7,161.8 L447.1,176.9 L444.9,191.2 L443.1,204.9 L441.7,217.8 L440.6,230.2 L439.7,242.1 L439.2,253.4 L438.8,264.3 L438.7,274.7 L438.8,284.7 L439.1,294.4 L439.5,303.6 L440.1,312.6 L440.9,321.2 L441.7,329.6 L442.7,337.6 L443.8,345.5 L445.0,353.0 L446.2,360.3 L447.6,367.5 L449.0,374.4 L450.5,381.1 L452.1,387.6 L453.8,393.9 L455.5,400.1 L457.2,406.1 L459.0,411.9 L460.9,417.6 L462.7,423.2 L464.7,428.6 L466.6,433.9 L468.6,439.0 L470.7,444.1 L472.7,449.0 L474.8,453.9 L476.9,458.6 L479.1,463.2 L481.2,467.7 L483.4,472.1 L485.6,476.5 L487.8,480.7 L490.0,484.9 L492.3,488.9 L494.5,492.9 L496.8,496.9 L499.1,500.7 L501.4,504.5 L503.7,508.2 L506.0,511.9 L508.3,515.4 L510.6,519.0 L512.9,522.4 L515.3,525.8 L517.6,529.2 L520.0,532.5 L522.3,535.7 L524.7,538.9 L527.0,542.0 L529.4,545.1 L531.7,548.1 L534.1,551.1 L536.5,554.1 L538.8,557.0 L541.2,559.8 L543.6,562.6 L545.9,565.4 L548.3,568.1 L550.7,570.8 L553.0,573.5 L555.4,576.1 L557.8,578.7 L560.1,581.3 L562.5,583.8 L564.8,586.3 L567.2,588.7 L569.6,591.1 L571.9,593.5 L574.3,595.9 L576.6,598.2 L579.0,600.5 L581.3,602.8 L583.6,605.0 L586.0,607.2 L588.3,609.4 L590.6,611.6 L593.0,613.7 L595.3,615.8 L597.6,617.9 L599.9,620.0 L602.2,622.0 L604.5,624.1 L606.8,626.0 L609.1,628.0 L611.4,630.0 L613.7,631.9 L616.0,633.8 L618.3,635.7 L620.6,637.6 L622.9,639.4 L625.1,641.3 L627.4,643.1 L629.7,644.9 L631.9,646.6 L634.2,648.4 L636.4,650.1 L638.7,651.9 L640.9,653.6 L643.2,655.2 L645.4,656.9 L647.6,658.6 L649.8,660.2 L652.1,661.8 L654.3,663.5 L656.5,665.0 L658.7,666.6 L660.9,668.2 L663.1,669.7 L665.3,671.3 L667.5,672.8 L669.7,674.3 L671.8,675.8 L674.0,677.3 L676.2,678.8 L678.3,680.2 L680.5,681.7 L682.7,683.1 L684.8,684.5 L686.9,685.9 L689.1,687.3 L691.2,688.7 L693.4,690.1 L695.5,691.4 L697.6,692.8 L699.7,694.1 L701.8,695.4 L704.0,696.7 L706.1,698.1 L708.2,699.3 L710.3,700.6 L712.4,701.9 L714.4,703.2 L716.5,704.4 L718.6,705.7 L720.7,706.9 L722.7,708.1 L724.8,709.4 L726.9,710.6 L728.9,711.8 L731.0,712.9 L733.0,714.1 L735.1,715.3 L737.1,716.5 L739.2,717.6 L741.2,718.8 L743.2,719.9 L745.2,721.0 L747.3,722.2 L749.3,723.3 L751.3,724.4 L753.3,725.5 L755.3,726.6 L757.3,727.6 L759.3,728.7 L761.3,729.8 L763.2,730.8 L765.2,731.9 L767.2,732.9 L769.2,734.0 L771.1,735.0 L773.1,736.0 L775.1,737.1 L777.0,738.1 L779.0,739.1 L780.9,740.1 L782.9,741.1 L784.8,742.0 L786.8,743.0 L788.7,744.0 L790.6,745.0 L792.5,745.9 L794.5,746.9 L796.4,747.8 L798.3,748.8 L800.2,749.7 L802.1,750.6 L804.0,751.5 L805.9,752.5 L807.8,753.4 L809.7,754.3 L811.6,755.2 L813.5,756.1 L815.3,757.0 L817.2,757.9 M517.0,26.7 L509.6,50.0 L503.3,71.8 L497.8,92.1 L493.2,111.1 L489.3,129.0 L486.0,145.9 L483.2,161.8 L481.0,176.9 L479.1,191.2 L477.7,204.9 L476.6,217.8 L475.8,230.2 L475.3,242.1 L475.0,253.4 L475.0,264.3 L475.2,274.7 L475.6,284.7 L476.2,294.4 L476.9,303.6 L477.7,312.6 L478.7,321.2 L479.9,329.6 L481.1,337.6 L482.5,345.5 L483.9,353.0 L485.4,360.3 L487.0,367.5 L488.7,374.4 L490.5,381.1 L492.3,387.6 L494.1,393.9 L496.1,400.1 L498.0,406.1 L500.1,411.9 L502.1,417.6 L504.2,423.2 L506.4,428.6 L508.6,433.9 L510.8,439.0 L513.0,444.1 L515.3,449.0 L517.5,453.9 L519.9,458.6 L522.2,463.2 L524.5,467.7 L526.9,472.1 L529.3,476.5 L531.7,480.7 L534.1,484.9 L536.5,488.9 L539.0,492.9 L541.4,496.9 L543.9,500.7 L546.3,504.5 L548.8,508.2 L551.3,511.9 L553.8,515.4 L556.3,519.0 L558.8,522.4 L561.3,525.8 L563.8,529.2 L566.3,532.5 L568.8,535.7 L571.3,538.9 L573.9,542.0 L576.4,545.1 L578.9,548.1 L581.4,551.1 L583.9,554.1 L586.4,557.0 L589.0,559.8 L591.5,562.6 L594.0,565.4 L596.5,568.1 L599.0,570.8 L601.5,573.5 L604.1,576.1 L606.6,578.7 L609.1,581.3 L611.6,583.8 L614.1,586.3 L616.6,588.7 L619.1,591.1 L621.6,593.5 L624.0,595.9 L626.5,598.2 L629.0,600.5 L631.5,602.8 L634.0,605.0 L636.4,607.2 L638.9,609.4 L641.3,611.6 L643.8,613.7 L646.3,615.8 L648.7,617.9 L651.1,620.0 L653.6,622.0 L656.0,624.1 L658.4,626.0 L660.9,628.0 L663.3,630.0 L665.7,631.9 L668.1,633.8 L670.5,635.7 L672.9,637.6 L675.3,639.4 L677.7,641.3 L680.1,643.1 L682.5,644.9 L684.9,646.6 L687.2,648.4 L689.6,650.1 L692.0,651.9 L694.3,653.6 L696.7,655.2 L699.0,656.9 L701.4,658.6 L703.7,660.2 L706.0,661.8 L708.4,663.5 L710.7,665.0 L713.0,666.6 L715.3,668.2 L717.6,669.7 L719.9,671.3 L722.2,672.8 L724.5,674.3 L726.8,675.8 L729.1,677.3 L731.3,678.8 L733.6,680.2 L735.9,681.7 L738.1,683.1 L740.4,684.5 L742.6,685.9 L744.9,687.3 L747.1,688.7 L749.4,690.1 L751.6,691.4 L753.8,692.8 L756.0,694.1 L758.2,695.4 L760.5,696.7 L762.7,698.1 L764.9,699.3 L767.1,700.6 L769.2,701.9 L771.4,703.2 L773.6,704.4 L775.8,705.7 L778.0,706.9 L780.1,708.1 L782.3,709.4 L784.4,710.6 L786.6,711.8 L788.7,712.9 L790.9,714.1 L793.0,715.3 L795.2,716.5 L797.3,717.6 L799.4,718.8 L801.5,719.9 L803.6,721.0 L805.7,722.2 L807.9,723.3 L810.0,724.4 L812.1,725.5 L814.1,726.6 L816.2,727.6 L818.3,728.7 L820.4,729.8 L822.5,730.8 L824.5,731.9 L826.6,732.9 L828.7,734.0 L830.7,735.0 L832.8,736.0 L834.8,737.1 L836.9,738.1 L838.9,739.1 L840.9,740.1 L843.0,741.1 L845.0,742.0 L847.0,743.0 L849.0,744.0 L851.0,745.0 L853.1,745.9 L855.1,746.9 L857.1,747.8 L859.1,748.8 L861.0,749.7 L863.0,750.6 L865.0,751.5 L867.0,752.5 L869.0,753.4 L871.0,754.3 L872.9,755.2 L874.9,756.1 L876.8,757.0 L878.8,757.9 M547.6,26.7 L540.7,50.0 L534.8,71.8 L529.8,92.1 L525.6,111.1 L522.0,129.0 L519.1,145.9 L516.7,161.8 L514.8,176.9 L513.3,191.2 L512.2,204.9 L511.5,217.8 L511.0,230.2 L510.8,242.1 L510.9,253.4 L511.2,264.3 L511.7,274.7 L512.4,284.7 L513.2,294.4 L514.2,303.6 L515.4,312.6 L516.6,321.2 L518.0,329.6 L519.5,337.6 L521.1,345.5 L522.8,353.0 L524.6,360.3 L526.4,367.5 L528.4,374.4 L530.4,381.1 L532.4,387.6 L534.5,393.9 L536.7,400.1 L538.9,406.1 L541.1,411.9 L543.4,417.6 L545.7,423.2 L548.1,428.6 L550.5,433.9 L552.9,439.0 L555.3,444.1 L557.8,449.0 L560.3,453.9 L562.8,458.6 L565.3,463.2 L567.9,467.7 L570.4,472.1 L573.0,476.5 L575.6,480.7 L578.2,484.9 L580.8,488.9 L583.4,492.9 L586.1,496.9 L588.7,500.7 L591.3,504.5 L594.0,508.2 L596.6,511.9 L599.3,515.4 L602.0,519.0 L604.6,522.4 L607.3,525.8 L610.0,529.2 L612.7,532.5 L615.3,535.7 L618.0,538.9 L620.7,542.0 L623.4,545.1 L626.0,548.1 L628.7,551.1 L631.4,554.1 L634.1,557.0 L636.7,559.8 L639.4,562.6 L642.1,565.4 L644.7,568.1 L647.4,570.8 L650.0,573.5 L652.7,576.1 L655.4,578.7 L658.0,581.3 L660.6,583.8 L663.3,586.3 L665.9,588.7 L668.6,591.1 L671.2,593.5 L673.8,595.9 L676.4,598.2 L679.0,600.5 L681.7,602.8 L684.3,605.0 L686.9,607.2 L689.5,609.4 L692.1,611.6 L694.6,613.7 L697.2,615.8 L699.8,617.9 L702.4,620.0 L704.9,622.0 L707.5,624.1 L710.1,626.0 L712.6,628.0 L715.1,630.0 L717.7,631.9 L720.2,633.8 L722.7,635.7 L725.3,637.6 L727.8,639.4 L730.3,641.3 L732.8,643.1 L735.3,644.9 L737.8,646.6 L740.3,648.4 L742.8,650.1 L745.2,651.9 L747.7,653.6 L750.2,655.2 L752.6,656.9 L755.1,658.6 L757.5,660.2 L760.0,661.8 L762.4,663.5 L764.9,665.0 L767.3,666.6 L769.7,668.2 L772.1,669.7 L774.5,671.3 L776.9,672.8 L779.3,674.3 L781.7,675.8 L784.1,677.3 L786.5,678.8 L788.9,680.2 L791.2,681.7 L793.6,683.1 L796.0,684.5 L798.3,685.9 L800.7,687.3 L803.0,688.7 L805.3,690.1 L807.7,691.4 L810.0,692.8 L812.3,694.1 L814.6,695.4 L816.9,696.7 L819.2,698.1 L821.5,699.3 L823.8,700.6 L826.1,701.9 L828.4,703.2 L830.7,704.4 L833.0,705.7 L835.2,706.9 L837.5,708.1 L839.8,709.4 L842.0,710.6 L844.3,711.8 L846.5,712.9 L848.7,714.1 L851.0,715.3 L853.2,716.5 L855.4,717.6 L857.6,718.8 L859.8,719.9 L862.0,721.0 L864.2,722.2 L866.4,723.3 L868.6,724.4 L870.8,725.5 L873.0,726.6 L875.2,727.6 L877.4,728.7 L879.5,729.8 L881.7,730.8 L883.8,731.9 L886.0,732.9 L888.1,734.0 L890.3,735.0 L892.4,736.0 L894.6,737.1 L896.7,738.1 L898.8,739.1 L900.9,740.1 L903.0,741.1 L905.2,742.0 L907.3,743.0 L909.4,744.0 L911.5,745.0 L913.6,745.9 L915.6,746.9 L917.7,747.8 L919.8,748.8 L921.9,749.7 L924.0,750.6 L926.0,751.5 L928.1,752.5 L930.1,753.4 L932.2,754.3 L934.3,755.2 L936.3,756.1 L938.3,757.0 L940.4,757.9 M578.2,26.7 L571.7,50.0 L566.3,71.8 L561.7,92.1 L557.9,111.1 L554.8,129.0 L552.2,145.9 L550.2,161.8 L548.7,176.9 L547.5,191.2 L546.8,204.9 L546.4,217.8 L546.2,230.2 L546.4,242.1 L546.7,253.4 L547.3,264.3 L548.1,274.7 L549.1,284.7 L550.3,294.4 L551.5,303.6 L553.0,312.6 L554.5,321.2 L556.2,329.6 L557.9,337.6 L559.8,345.5 L561.7,353.0 L563.8,360.3 L565.9,367.5 L568.0,374.4 L570.3,381.1 L572.6,387.6 L574.9,393.9 L577.3,400.1 L579.7,406.1 L582.2,411.9 L584.7,417.6 L587.2,423.2 L589.8,428.6 L592.4,433.9 L595.0,439.0 L597.7,444.1 L600.3,449.0 L603.0,453.9 L605.7,458.6 L608.5,463.2 L611.2,467.7 L614.0,472.1 L616.7,476.5 L619.5,480.7 L622.3,484.9 L625.1,488.9 L627.9,492.9 L630.7,496.9 L633.5,500.7 L636.3,504.5 L639.2,508.2 L642.0,511.9 L644.8,515.4 L647.6,519.0 L650.5,522.4 L653.3,525.8 L656.2,529.2 L659.0,532.5 L661.8,535.7 L664.7,538.9 L667.5,542.0 L670.3,545.1 L673.2,548.1 L676.0,551.1 L678.8,554.1 L681.7,557.0 L684.5,559.8 L687.3,562.6 L690.1,565.4 L692.9,568.1 L695.7,570.8 L698.6,573.5 L701.4,576.1 L704.1,578.7 L706.9,581.3 L709.7,583.8 L712.5,586.3 L715.3,588.7 L718.1,591.1 L720.8,593.5 L723.6,595.9 L726.3,598.2 L729.1,600.5 L731.8,602.8 L734.6,605.0 L737.3,607.2 L740.0,609.4 L742.8,611.6 L745.5,613.7 L748.2,615.8 L750.9,617.9 L753.6,620.0 L756.3,622.0 L759.0,624.1 L761.7,626.0 L764.3,628.0 L767.0,630.0 L769.7,631.9 L772.3,633.8 L775.0,635.7 L777.6,637.6 L780.2,639.4 L782.9,641.3 L785.5,643.1 L788.1,644.9 L790.7,646.6 L793.3,648.4 L795.9,650.1 L798.5,651.9 L801.1,653.6 L803.7,655.2 L806.3,656.9 L808.8,658.6 L811.4,660.2 L814.0,661.8 L816.5,663.5 L819.0,665.0 L821.6,666.6 L824.1,668.2 L826.6,669.7 L829.2,671.3 L831.7,672.8 L834.2,674.3 L836.7,675.8 L839.2,677.3 L841.7,678.8 L844.1,680.2 L846.6,681.7 L849.1,683.1 L851.5,684.5 L854.0,685.9 L856.4,687.3 L858.9,688.7 L861.3,690.1 L863.8,691.4 L866.2,692.8 L868.6,694.1 L871.0,695.4 L873.4,696.7 L875.8,698.1 L878.2,699.3 L880.6,700.6 L883.0,701.9 L885.4,703.2 L887.8,704.4 L890.1,705.7 L892.5,706.9 L894.9,708.1 L897.2,709.4 L899.6,710.6 L901.9,711.8 L904.2,712.9 L906.6,714.1 L908.9,715.3 L911.2,716.5 L913.5,717.6 L915.8,718.8 L918.2,719.9 L920.4,721.0 L922.7,722.2 L925.0,723.3 L927.3,724.4 L929.6,725.5 L931.9,726.6 L934.1,727.6 L936.4,728.7 L938.6,729.8 L940.9,730.8 L943.1,731.9 L945.4,732.9 L947.6,734.0 L949.9,735.0 L952.1,736.0 L954.3,737.1 L956.5,738.1 L958.7,739.1 L960.9,740.1 L963.1,741.1 L965.3,742.0 L967.5,743.0 L969.7,744.0 L971.9,745.0 L974.1,745.9 L976.2,746.9 L978.4,747.8 L980.6,748.8 L982.7,749.7 L984.9,750.6 L987.0,751.5 L989.2,752.5 L991.3,753.4 L993.5,754.3 L995.6,755.2 L997.7,756.1 L999.8,757.0 L1002.0,757.9" stroke="#800000" stroke-width="1" fill="none" shape-rendering="crispEdges"/>
<path d="M78.7,758.7 L78.0,758.0 L77.3,757.3 L76.6,756.6 L75.9,755.9 L75.2,755.2 L74.5,754.5 L73.8,753.7 L73.1,753.0 L72.3,752.3 L71.6,751.5 L70.9,750.8 L70.2,750.1 L69.5,749.3 L68.8,748.6 L68.1,747.8 L67.4,747.1 L66.7,746.3 L65.9,745.5 L65.2,744.8 L64.5,744.0 L63.8,743.2 L63.1,742.4 L62.4,741.6 L61.7,740.9 L60.9,740.1 L60.2,739.3 L59.5,738.5 L58.8,737.7 L58.1,736.9 L57.3,736.0 L56.6,735.2 L55.9,734.4 L55.2,733.6 L54.5,732.7 L53.7,731.9 L53.0,731.1 L52.3,730.2 L51.6,729.4 L50.8,728.5 L50.1,727.6 L49.4,726.8 L48.7,725.9 L47.9,725.0 L47.2,724.2 L46.5,723.3 L45.8,722.4 L45.0,721.5 L44.3,720.6 L43.6,719.7 L42.9,718.8 L42.1,717.8 L41.4,716.9 L40.7,716.0 L40.0,715.1 L39.2,714.1 L38.5,713.2 L37.8,712.2 L37.1,711.3 L36.3,710.3 L35.6,709.4 L34.9,708.4 L34.2,707.4 L33.4,706.4 L32.7,705.4 L32.0,704.4 L31.3,703.4 L30.5,702.4 L29.8,701.4 L29.1,700.4 L28.4,699.3 L27.6,698.3 L26.9,697.3 L26.2,696.2 L25.5,695.2 L24.7,694.1 L24.0,693.0 L23.3,692.0 L22.6,690.9 L21.8,689.8 L21.1,688.7 L20.4,687.6 L19.7,686.5 L19.0,685.3 L18.3,684.2 L17.5,683.1 L16.8,681.9 L16.1,680.8 L15.4,679.6 L14.7,678.5 L14.0,677.3 L13.2,676.1 L12.5,674.9 L11.8,673.7 L11.1,672.5 L10.4,671.3 L9.7,670.0 L9.0,668.8 L8.3,667.6 L7.6,666.3 L6.9,665.0 L6.2,663.8 L5.5,662.5 L4.8,661.2 L4.1,659.9 L3.4,658.6 L2.7,657.3 L2.0,655.9 L1.3,654.6 L0.6,653.2 L-0.1,651.9 L-0.7,650.5 L-1.4,649.1 L-2.1,647.7 L-2.8,646.3 L-3.5,644.9 L-4.1,643.4 L-4.8,642.0 L-5.5,640.5 L-6.1,639.1 L-6.8,637.6 L-7.5,636.1 L-8.1,634.6 L-8.8,633.1 L-9.4,631.5 L-10.1,630.0 L-10.7,628.4 L-11.4,626.8 L-12.0,625.3 L-12.7,623.6 L-13.3,622.0 L-13.9,620.4 L-14.5,618.8 L-15.2,617.1 L-15.8,615.4 L-16.4,613.7 L-17.0,612.0 L-17.6,610.3 L-18.2,608.6 L-18.8,606.8 L-19.4,605.0 L-20.0,603.2 L-20.6,601.4 L-21.2,599.6 L-21.7,597.7 L-22.3,595.9 L-22.9,594.0 L-23.4,592.1 L-24.0,590.2 L-24.5,588.2 L-25.1,586.3 L-25.6,584.3 L-26.1,582.3 L-26.6,580.2 L-27.1,578.2 L-27.7,576.1 L-28.1,574.0 L-28.6,571.9 L-29.1,569.8 L-29.6,567.6 L-30.1,565.4 L-30.5,563.2 L-31.0,560.9 L-31.4,558.7 L-31.8,556.4 L-32.2,554.1 L-32.6,551.7 L-33.0,549.3 L-33.4,546.9 L-33.8,544.5 L-34.2,542.0 L-34.5,539.5 L-34.9,537.0 L-35.2,534.4 L-35.5,531.8 L-35.8,529.2 L-36.1,526.5 L-36.3,523.8 L-36.6,521.1 L-36.8,518.3 L-37.1,515.4 L-37.3,512.6 L-37.4,509.7 L-37.6,506.7 L-37.8,503.8 L-37.9,500.7 L-38.0,497.7 L-38.1,494.5 L-38.2,491.4 L-38.2,488.1 L-38.2,484.9 L-38.2,481.5 L-38.2,478.2 L-38.1,474.7 L-38.1,471.2 L-38.0,467.7 L-37.8,464.1 L-37.6,460.4 L-37.4,456.7 L-37.2,452.9 L-36.9,449.0 L-36.6,445.1 L-36.3,441.1 L-35.9,437.0 L-35.5,432.8 L-35.0,428.6 L-34.5,424.3 L-34.0,419.9 L-33.4,415.4 L-32.7,410.8 L-32.0,406.1 L-31.2,401.3 L-30.4,396.4 L-29.5,391.4 L-28.6,386.3 L-27.6,381.1 L-26.5,375.7 L-25.3,370.2 L-24.1,364.6 L-22.8,358.9 L-21.4,353.0 L-19.9,347.0 L-18.3,340.8 L-16.6,334.4 L-14.9,327.9 L-13.0,321.2 L-10.9,314.3 L-8.8,307.3 L-6.5,300.0 L-4.1,292.5 M139.6,758.7 L138.8,758.0 L138.1,757.3 L137.4,756.6 L136.6,755.9 L135.9,755.2 L135.2,754.5 L134.4,753.7 L133.7,753.0 L132.9,752.3 L132.2,751.5 L131.5,750.8 L130.7,750.1 L130.0,749.3 L129.2,748.6 L128.5,747.8 L127.7,747.1 L127.0,746.3 L126.2,745.5 L125.5,744.8 L124.7,744.0 L124.0,743.2 L123.2,742.4 L122.5,741.6 L121.7,740.9 L120.9,740.1 L120.2,739.3 L119.4,738.5 L118.6,737.7 L117.9,736.9 L117.1,736.0 L116.4,735.2 L115.6,734.4 L114.8,733.6 L114.1,732.7 L113.3,731.9 L112.5,731.1 L111.7,730.2 L111.0,729.4 L110.2,728.5 L109.4,727.6 L108.6,726.8 L107.9,725.9 L107.1,725.0 L106.3,724.2 L105.5,723.3 L104.8,722.4 L104.0,721.5 L103.2,720.6 L102.4,719.7 L101.6,718.8 L100.8,717.8 L100.1,716.9 L99.3,716.0 L98.5,715.1 L97.7,714.1 L96.9,713.2 L96.1,712.2 L95.3,711.3 L94.6,710.3 L93.8,709.4 L93.0,708.4 L92.2,707.4 L91.4,706.4 L90.6,705.4 L89.8,704.4 L89.0,703.4 L88.2,702.4 L87.4,701.4 L86.6,700.4 L85.9,699.3 L85.1,698.3 L84.3,697.3 L83.5,696.2 L82.7,695.2 L81.9,694.1 L81.1,693.0 L80.3,692.0 L79.5,690.9 L78.7,689.8 L77.9,688.7 L77.1,687.6 L76.3,686.5 L75.5,685.3 L74.7,684.2 L73.9,683.1 L73.1,681.9 L72.4,680.8 L71.6,679.6 L70.8,678.5 L70.0,677.3 L69.2,676.1 L68.4,674.9 L67.6,673.7 L66.8,672.5 L66.0,671.3 L65.2,670.0 L64.4,668.8 L63.7,667.6 L62.9,666.3 L62.1,665.0 L61.3,663.8 L60.5,662.5 L59.7,661.2 L58.9,659.9 L58.2,658.6 L57.4,657.3 L56.6,655.9 L55.8,654.6 L55.0,653.2 L54.3,651.9 L53.5,650.5 L52.7,649.1 L51.9,647.7 L51.2,646.3 L50.4,644.9 L49.6,643.4 L48.9,642.0 L48.1,640.5 L47.4,639.1 L46.6,637.6 L45.8,636.1 L45.1,634.6 L44.3,633.1 L43.6,631.5 L42.8,630.0 L42.1,628.4 L41.3,626.8 L40.6,625.3 L39.9,623.6 L39.1,622.0 L38.4,620.4 L37.7,618.8 L36.9,617.1 L36.2,615.4 L35.5,613.7 L34.8,612.0 L34.1,610.3 L33.4,608.6 L32.7,606.8 L32.0,605.0 L31.3,603.2 L30.6,601.4 L29.9,599.6 L29.2,597.7 L28.5,595.9 L27.8,594.0 L27.2,592.1 L26.5,590.2 L25.9,588.2 L25.2,586.3 L24.6,584.3 L23.9,582.3 L23.3,580.2 L22.7,578.2 L22.0,576.1 L21.4,574.0 L20.8,571.9 L20.2,569.8 L19.6,567.6 L19.0,565.4 L18.5,563.2 L17.9,560.9 L17.3,558.7 L16.8,556.4 L16.2,554.1 L15.7,551.7 L15.2,549.3 L14.7,546.9 L14.2,544.5 L13.7,542.0 L13.2,539.5 L12.7,537.0 L12.3,534.4 L11.8,531.8 L11.4,529.2 L11.0,526.5 L10.6,523.8 L10.2,521.1 L9.8,518.3 L9.4,515.4 L9.1,512.6 L8.8,509.7 L8.4,506.7 L8.2,503.8 L7.9,500.7 L7.6,497.7 L7.4,494.5 L7.2,491.4 L7.0,488.1 L6.8,484.9 L6.7,481.5 L6.5,478.2 L6.4,474.7 L6.4,471.2 L6.3,467.7 L6.3,464.1 L6.3,460.4 L6.3,456.7 L6.4,452.9 L6.5,449.0 L6.7,445.1 L6.8,441.1 L7.0,437.0 L7.3,432.8 L7.6,428.6 L7.9,424.3 L8.3,419.9 L8.7,415.4 L9.2,410.8 L9.7,406.1 L10.3,401.3 L10.9,396.4 L11.6,391.4 L12.4,386.3 L13.2,381.1 L14.1,375.7 L15.0,370.2 L16.1,364.6 L17.2,358.9 L18.4,353.0 L19.6,347.0 L21.0,340.8 L22.5,334.4 L24.1,327.9 L25.8,321.2 L27.6,314.3 L29.5,307.3 L31.5,300.0 L33.7,292.5 L36.1,284.7 L38.6,276.7 L41.2,268.5 L44.1,260.0 L47.1,251.2 L50.3,242.1 M199.5,758.7 L198.8,758.0 L198.1,757.3 L197.4,756.6 L196.6,755.9 L195.9,755.2 L195.2,754.5 L194.4,753.7 L193.7,753.0 L193.0,752.3 L192.2,751.5 L191.5,750.8 L190.8,750.1 L190.0,749.3 L189.3,748.6 L188.5,747.8 L187.8,747.1 L187.0,746.3 L186.3,745.5 L185.5,744.8 L184.8,744.0 L184.0,743.2 L183.2,742.4 L182.5,741.6 L181.7,740.9 L180.9,740.1 L180.2,739.3 L179.4,738.5 L178.6,737.7 L177.8,736.9 L177.1,736.0 L176.3,735.2 L175.5,734.4 L174.7,733.6 L173.9,732.7 L173.1,731.9 L172.3,731.1 L171.6,730.2 L170.8,729.4 L170.0,728.5 L169.2,727.6 L168.4,726.8 L167.6,725.9 L166.8,725.0 L166.0,724.2 L165.1,723.3 L164.3,722.4 L163.5,721.5 L162.7,720.6 L161.9,719.7 L161.1,718.8 L160.3,717.8 L159.4,716.9 L158.6,716.0 L157.8,715.1 L157.0,714.1 L156.2,713.2 L155.3,712.2 L154.5,711.3 L153.7,710.3 L152.8,709.4 L152.0,708.4 L151.2,707.4 L150.3,706.4 L149.5,705.4 L148.7,704.4 L147.8,703.4 L147.0,702.4 L146.1,701.4 L145.3,700.4 L144.5,699.3 L143.6,698.3 L142.8,697.3 L141.9,696.2 L141.1,695.2 L140.2,694.1 L139.4,693.0 L138.5,692.0 L137.7,690.9 L136.8,689.8 L136.0,688.7 L135.1,687.6 L134.2,686.5 L133.4,685.3 L132.5,684.2 L131.7,683.1 L130.8,681.9 L130.0,680.8 L129.1,679.6 L128.2,678.5 L127.4,677.3 L126.5,676.1 L125.6,674.9 L124.8,673.7 L123.9,672.5 L123.1,671.3 L122.2,670.0 L121.3,668.8 L120.5,667.6 L119.6,666.3 L118.7,665.0 L117.9,663.8 L117.0,662.5 L116.2,661.2 L115.3,659.9 L114.4,658.6 L113.6,657.3 L112.7,655.9 L111.8,654.6 L111.0,653.2 L110.1,651.9 L109.3,650.5 L108.4,649.1 L107.5,647.7 L106.7,646.3 L105.8,644.9 L105.0,643.4 L104.1,642.0 L103.3,640.5 L102.4,639.1 L101.6,637.6 L100.7,636.1 L99.9,634.6 L99.0,633.1 L98.2,631.5 L97.3,630.0 L96.5,628.4 L95.6,626.8 L94.8,625.3 L94.0,623.6 L93.1,622.0 L92.3,620.4 L91.5,618.8 L90.6,617.1 L89.8,615.4 L89.0,613.7 L88.2,612.0 L87.3,610.3 L86.5,608.6 L85.7,606.8 L84.9,605.0 L84.1,603.2 L83.3,601.4 L82.5,599.6 L81.7,597.7 L80.9,595.9 L80.1,594.0 L79.4,592.1 L78.6,590.2 L77.8,588.2 L77.0,586.3 L76.3,584.3 L75.5,582.3 L74.8,580.2 L74.0,578.2 L73.3,576.1 L72.5,574.0 L71.8,571.9 L71.1,569.8 L70.4,567.6 L69.7,565.4 L69.0,563.2 L68.3,560.9 L67.6,558.7 L66.9,556.4 L66.2,554.1 L65.6,551.7 L64.9,549.3 L64.3,546.9 L63.6,544.5 L63.0,542.0 L62.4,539.5 L61.8,537.0 L61.2,534.4 L60.6,531.8 L60.1,529.2 L59.5,526.5 L59.0,523.8 L58.4,521.1 L57.9,518.3 L57.4,515.4 L56.9,512.6 L56.4,509.7 L56.0,506.7 L55.5,503.8 L55.1,500.7 L54.7,497.7 L54.3,494.5 L54.0,491.4 L53.6,488.1 L53.3,484.9 L53.0,481.5 L52.7,478.2 L52.4,474.7 L52.2,471.2 L52.0,467.7 L51.8,464.1 L51.7,460.4 L51.5,456.7 L51.4,452.9 L51.4,449.0 L51.3,445.1 L51.3,441.1 L51.4,437.0 L51.4,432.8 L51.6,428.6 L51.7,424.3 L51.9,419.9 L52.1,415.4 L52.4,410.8 L52.8,406.1 L53.2,401.3 L53.6,396.4 L54.1,391.4 L54.6,386.3 L55.3,381.1 L56.0,375.7 L56.7,370.2 L57.5,364.6 L58.4,358.9 L59.4,353.0 L60.5,347.0 L61.6,340.8 L62.9,334.4 L64.2,327.9 L65.7,321.2 L67.3,314.3 L69.0,307.3 L70.8,300.0 L72.7,292.5 L74.8,284.7 L77.1,276.7 L79.5,268.5 L82.1,260.0 L84.8,251.2 L87.8,242.1 L91.0,232.6 L94.4,222.9 L98.0,212.7 L102.0,202.2 L106.2,191.2 L110.7,179.8 M258.1,758.7 L257.5,758.0 L256.8,757.3 L256.2,756.6 L255.5,755.9 L254.8,755.2 L254.2,754.5 L253.5,753.7 L252.8,753.0 L252.2,752.3 L251.5,751.5 L250.8,750.8 L250.1,750.1 L249.4,749.3 L248.7,748.6 L248.0,747.8 L247.3,747.1 L246.6,746.3 L245.9,745.5 L245.2,744.8 L244.5,744.0 L243.8,743.2 L243.1,742.4 L242.4,741.6 L241.7,740.9 L240.9,740.1 L240.2,739.3 L239.5,738.5 L238.7,737.7 L238.0,736.9 L237.3,736.0 L236.5,735.2 L235.8,734.4 L235.0,733.6 L234.3,732.7 L233.5,731.9 L232.8,731.1 L232.0,730.2 L231.2,729.4 L230.5,728.5 L229.7,727.6 L228.9,726.8 L228.1,725.9 L227.4,725.0 L226.6,724.2 L225.8,723.3 L225.0,722.4 L224.2,721.5 L223.4,720.6 L222.6,719.7 L221.8,718.8 L221.0,717.8 L220.2,716.9 L219.4,716.0 L218.6,715.1 L217.8,714.1 L216.9,713.2 L216.1,712.2 L215.3,711.3 L214.5,710.3 L213.6,709.4 L212.8,708.4 L212.0,707.4 L211.1,706.4 L210.3,705.4 L209.4,704.4 L208.6,703.4 L207.7,702.4 L206.9,701.4 L206.0,700.4 L205.2,699.3 L204.3,698.3 L203.5,697.3 L202.6,696.2 L201.7,695.2 L200.9,694.1 L200.0,693.0 L199.1,692.0 L198.2,690.9 L197.4,689.8 L196.5,688.7 L195.6,687.6 L194.7,686.5 L193.8,685.3 L192.9,684.2 L192.0,683.1 L191.1,681.9 L190.2,680.8 L189.3,679.6 L188.4,678.5 L187.5,677.3 L186.6,676.1 L185.7,674.9 L184.8,673.7 L183.9,672.5 L183.0,671.3 L182.1,670.0 L181.2,668.8 L180.2,667.6 L179.3,666.3 L178.4,665.0 L177.5,663.8 L176.6,662.5 L175.6,661.2 L174.7,659.9 L173.8,658.6 L172.9,657.3 L171.9,655.9 L171.0,654.6 L170.1,653.2 L169.2,651.9 L168.2,650.5 L167.3,649.1 L166.4,647.7 L165.4,646.3 L164.5,644.9 L163.6,643.4 L162.6,642.0 L161.7,640.5 L160.8,639.1 L159.8,637.6 L158.9,636.1 L158.0,634.6 L157.0,633.1 L156.1,631.5 L155.2,630.0 L154.2,628.4 L153.3,626.8 L152.4,625.3 L151.4,623.6 L150.5,622.0 L149.6,620.4 L148.6,618.8 L147.7,617.1 L146.8,615.4 L145.9,613.7 L145.0,612.0 L144.0,610.3 L143.1,608.6 L142.2,606.8 L141.3,605.0 L140.4,603.2 L139.5,601.4 L138.6,599.6 L137.7,597.7 L136.8,595.9 L135.9,594.0 L135.0,592.1 L134.1,590.2 L133.2,588.2 L132.3,586.3 L131.4,584.3 L130.5,582.3 L129.7,580.2 L128.8,578.2 L127.9,576.1 L127.1,574.0 L126.2,571.9 L125.4,569.8 L124.5,567.6 L123.7,565.4 L122.9,563.2 L122.0,560.9 L121.2,558.7 L120.4,556.4 L119.6,554.1 L118.8,551.7 L118.0,549.3 L117.2,546.9 L116.5,544.5 L115.7,542.0 L115.0,539.5 L114.2,537.0 L113.5,534.4 L112.7,531.8 L112.0,529.2 L111.3,526.5 L110.6,523.8 L110.0,521.1 L109.3,518.3 L108.6,515.4 L108.0,512.6 L107.4,509.7 L106.8,506.7 L106.2,503.8 L105.6,500.7 L105.0,497.7 L104.5,494.5 L103.9,491.4 L103.4,488.1 L102.9,484.9 L102.5,481.5 L102.0,478.2 L101.6,474.7 L101.2,471.2 L100.8,467.7 L100.4,464.1 L100.1,460.4 L99.8,456.7 L99.5,452.9 L99.3,449.0 L99.1,445.1 L98.9,441.1 L98.7,437.0 L98.6,432.8 L98.5,428.6 L98.5,424.3 L98.5,419.9 L98.5,415.4 L98.6,410.8 L98.8,406.1 L98.9,401.3 L99.2,396.4 L99.5,391.4 L99.8,386.3 L100.2,381.1 L100.7,375.7 L101.2,370.2 L101.8,364.6 L102.5,358.9 L103.3,353.0 L104.1,347.0 L105.0,340.8 L106.0,334.4 L107.2,327.9 L108.4,321.2 L109.7,314.3 L111.1,307.3 L112.7,300.0 L114.4,292.5 L116.2,284.7 L118.2,276.7 L120.4,268.5 L122.7,260.0 L125.2,251.2 L127.8,242.1 L130.7,232.6 L133.8,222.9 L137.2,212.7 L140.8,202.2 L144.7,191.2 L148.9,179.8 L153.5,167.9 L158.4,155.5 L163.6,142.6 L169.3,129.0 L175.5,114.8 M315.2,758.7 L314.7,758.0 L314.1,757.3 L313.6,756.6 L313.1,755.9 L312.5,755.2 L312.0,754.5 L311.4,753.7 L310.9,753.0 L310.3,752.3 L309.8,751.5 L309.2,750.8 L308.6,750.1 L308.0,749.3 L307.5,748.6 L306.9,747.8 L306.3,747.1 L305.7,746.3 L305.1,745.5 L304.6,744.8 L304.0,744.0 L303.4,743.2 L302.8,742.4 L302.2,741.6 L301.5,740.9 L300.9,740.1 L300.3,739.3 L299.7,738.5 L299.1,737.7 L298.4,736.9 L297.8,736.0 L297.2,735.2 L296.5,734.4 L295.9,733.6 L295.2,732.7 L294.6,731.9 L293.9,731.1 L293.3,730.2 L292.6,729.4 L292.0,728.5 L291.3,727.6 L290.6,726.8 L289.9,725.9 L289.3,725.0 L288.6,724.2 L287.9,723.3 L287.2,722.4 L286.5,721.5 L285.8,720.6 L285.1,719.7 L284.4,718.8 L283.6,717.8 L282.9,716.9 L282.2,716.0 L281.5,715.1 L280.7,714.1 L280.0,713.2 L279.3,712.2 L278.5,711.3 L277.8,710.3 L277.0,709.4 L276.3,708.4 L275.5,707.4 L274.7,706.4 L274.0,705.4 L273.2,704.4 L272.4,703.4 L271.6,702.4 L270.8,701.4 L270.0,700.4 L269.2,699.3 L268.4,698.3 L267.6,697.3 L266.8,696.2 L266.0,695.2 L265.2,694.1 L264.4,693.0 L263.5,692.0 L262.7,690.9 L261.9,689.8 L261.0,688.7 L260.2,687.6 L259.3,686.5 L258.5,685.3 L257.6,684.2 L256.8,683.1 L255.9,681.9 L255.0,680.8 L254.2,679.6 L253.3,678.5 L252.4,677.3 L251.5,676.1 L250.6,674.9 L249.7,673.7 L248.8,672.5 L247.9,671.3 L247.0,670.0 L246.1,668.8 L245.2,667.6 L244.3,666.3 L243.4,665.0 L242.4,663.8 L241.5,662.5 L240.6,661.2 L239.7,659.9 L238.7,658.6 L237.8,657.3 L236.8,655.9 L235.9,654.6 L234.9,653.2 L234.0,651.9 L233.0,650.5 L232.1,649.1 L231.1,647.7 L230.1,646.3 L229.2,644.9 L228.2,643.4 L227.2,642.0 L226.3,640.5 L225.3,639.1 L224.3,637.6 L223.3,636.1 L222.3,634.6 L221.3,633.1 L220.4,631.5 L219.4,630.0 L218.4,628.4 L217.4,626.8 L216.4,625.3 L215.4,623.6 L214.4,622.0 L213.4,620.4 L212.4,618.8 L211.4,617.1 L210.4,615.4 L209.4,613.7 L208.4,612.0 L207.4,610.3 L206.4,608.6 L205.4,606.8 L204.4,605.0 L203.3,603.2 L202.3,601.4 L201.3,599.6 L200.3,597.7 L199.3,595.9 L198.3,594.0 L197.3,592.1 L196.3,590.2 L195.3,588.2 L194.3,586.3 L193.3,584.3 L192.4,582.3 L191.4,580.2 L190.4,578.2 L189.4,576.1 L188.4,574.0 L187.4,571.9 L186.5,569.8 L185.5,567.6 L184.5,565.4 L183.6,563.2 L182.6,560.9 L181.6,558.7 L180.7,556.4 L179.8,554.1 L178.8,551.7 L177.9,549.3 L177.0,546.9 L176.0,544.5 L175.1,542.0 L174.2,539.5 L173.3,537.0 L172.4,534.4 L171.6,531.8 L170.7,529.2 L169.8,526.5 L169.0,523.8 L168.1,521.1 L167.3,518.3 L166.5,515.4 L165.7,512.6 L164.9,509.7 L164.1,506.7 L163.3,503.8 L162.6,500.7 L161.8,497.7 L161.1,494.5 L160.4,491.4 L159.7,488.1 L159.0,484.9 L158.4,481.5 L157.7,478.2 L157.1,474.7 L156.5,471.2 L155.9,467.7 L155.4,464.1 L154.8,460.4 L154.3,456.7 L153.9,452.9 L153.4,449.0 L153.0,445.1 L152.6,441.1 L152.2,437.0 L151.9,432.8 L151.6,428.6 L151.4,424.3 L151.2,419.9 L151.0,415.4 L150.8,410.8 L150.8,406.1 L150.7,401.3 L150.7,396.4 L150.8,391.4 L150.9,386.3 L151.0,381.1 L151.3,375.7 L151.6,370.2 L151.9,364.6 L152.3,358.9 L152.8,353.0 L153.4,347.0 L154.1,340.8 L154.8,334.4 L155.7,327.9 L156.6,321.2 L157.7,314.3 L158.8,307.3 L160.1,300.0 L161.5,292.5 L163.0,284.7 L164.7,276.7 L166.6,268.5 L168.6,260.0 L170.7,251.2 L173.1,242.1 L175.7,232.6 L178.5,222.9 L181.5,212.7 L184.8,202.2 L188.3,191.2 L192.1,179.8 L196.3,167.9 L200.8,155.5 L205.7,142.6 L211.0,129.0 L216.8,114.8 L223.1,99.8 L229.9,84.1 L237.4,67.5 L245.5,50.0 M371.2,758.7 L370.8,758.0 L370.4,757.3 L370.1,756.6 L369.7,755.9 L369.3,755.2 L368.9,754.5 L368.5,753.7 L368.1,753.0 L367.7,752.3 L367.3,751.5 L366.9,750.8 L366.5,750.1 L366.1,749.3 L365.7,748.6 L365.2,747.8 L364.8,747.1 L364.4,746.3 L364.0,745.5 L363.6,744.8 L363.1,744.0 L362.7,743.2 L362.3,742.4 L361.8,741.6 L361.4,740.9 L360.9,740.1 L360.5,739.3 L360.0,738.5 L359.6,737.7 L359.1,736.9 L358.7,736.0 L358.2,735.2 L357.7,734.4 L357.3,733.6 L356.8,732.7 L356.3,731.9 L355.8,731.1 L355.3,730.2 L354.9,729.4 L354.4,728.5 L353.9,727.6 L353.4,726.8 L352.9,725.9 L352.4,725.0 L351.8,724.2 L351.3,723.3 L350.8,722.4 L350.3,721.5 L349.8,720.6 L349.2,719.7 L348.7,718.8 L348.2,717.8 L347.6,716.9 L347.1,716.0 L346.5,715.1 L346.0,714.1 L345.4,713.2 L344.8,712.2 L344.3,711.3 L343.7,710.3 L343.1,709.4 L342.5,708.4 L342.0,707.4 L341.4,706.4 L340.8,705.4 L340.2,704.4 L339.6,703.4 L338.9,702.4 L338.3,701.4 L337.7,700.4 L337.1,699.3 L336.4,698.3 L335.8,697.3 L335.2,696.2 L334.5,695.2 L333.9,694.1 L333.2,693.0 L332.5,692.0 L331.9,690.9 L331.2,689.8 L330.5,688.7 L329.8,687.6 L329.1,686.5 L328.5,685.3 L327.8,684.2 L327.0,683.1 L326.3,681.9 L325.6,680.8 L324.9,679.6 L324.2,678.5 L323.4,677.3 L322.7,676.1 L321.9,674.9 L321.2,673.7 L320.4,672.5 L319.6,671.3 L318.9,670.0 L318.1,668.8 L317.3,667.6 L316.5,666.3 L315.7,665.0 L314.9,663.8 L314.1,662.5 L313.3,661.2 L312.5,659.9 L311.6,658.6 L310.8,657.3 L310.0,655.9 L309.1,654.6 L308.3,653.2 L307.4,651.9 L306.5,650.5 L305.7,649.1 L304.8,647.7 L303.9,646.3 L303.0,644.9 L302.1,643.4 L301.2,642.0 L300.3,640.5 L299.4,639.1 L298.5,637.6 L297.6,636.1 L296.6,634.6 L295.7,633.1 L294.7,631.5 L293.8,630.0 L292.8,628.4 L291.9,626.8 L290.9,625.3 L289.9,623.6 L289.0,622.0 L288.0,620.4 L287.0,618.8 L286.0,617.1 L285.0,615.4 L284.0,613.7 L283.0,612.0 L282.0,610.3 L281.0,608.6 L280.0,606.8 L278.9,605.0 L277.9,603.2 L276.9,601.4 L275.8,599.6 L274.8,597.7 L273.7,595.9 L272.7,594.0 L271.7,592.1 L270.6,590.2 L269.5,588.2 L268.5,586.3 L267.4,584.3 L266.4,582.3 L265.3,580.2 L264.2,578.2 L263.2,576.1 L262.1,574.0 L261.0,571.9 L260.0,569.8 L258.9,567.6 L257.8,565.4 L256.7,563.2 L255.7,560.9 L254.6,558.7 L253.5,556.4 L252.5,554.1 L251.4,551.7 L250.4,549.3 L249.3,546.9 L248.2,544.5 L247.2,542.0 L246.1,539.5 L245.1,537.0 L244.0,534.4 L243.0,531.8 L242.0,529.2 L240.9,526.5 L239.9,523.8 L238.9,521.1 L237.9,518.3 L236.9,515.4 L235.9,512.6 L234.9,509.7 L234.0,506.7 L233.0,503.8 L232.1,500.7 L231.1,497.7 L230.2,494.5 L229.3,491.4 L228.4,488.1 L227.5,484.9 L226.6,481.5 L225.8,478.2 L224.9,474.7 L224.1,471.2 L223.3,467.7 L222.5,464.1 L221.8,460.4 L221.0,456.7 L220.3,452.9 L219.6,449.0 L219.0,445.1 L218.3,441.1 L217.7,437.0 L217.1,432.8 L216.6,428.6 L216.1,424.3 L215.6,419.9 L215.1,415.4 L214.7,410.8 L214.4,406.1 L214.1,401.3 L213.8,396.4 L213.5,391.4 L213.4,386.3 L213.2,381.1 L213.2,375.7 L213.2,370.2 L213.2,364.6 L213.3,358.9 L213.5,353.0 L213.8,347.0 L214.1,340.8 L214.6,334.4 L215.1,327.9 L215.7,321.2 L216.4,314.3 L217.2,307.3 L218.1,300.0 L219.2,292.5 L220.4,284.7 L221.7,276.7 L223.1,268.5 L224.8,260.0 L226.6,251.2 L228.5,242.1 L230.7,232.6 L233.1,222.9 L235.7,212.7 L238.5,202.2 L241.6,191.2 L245.0,179.8 L248.8,167.9 L252.8,155.5 L257.3,142.6 L262.1,129.0 L267.4,114.8 L273.2,99.8 L279.5,84.1 L286.4,67.5 L294.0,50.0 M426.9,758.7 L426.7,758.0 L426.5,757.3 L426.3,756.6 L426.0,755.9 L425.8,755.2 L425.6,754.5 L425.3,753.7 L425.1,753.0 L424.9,752.3 L424.6,751.5 L424.4,750.8 L424.2,750.1 L423.9,749.3 L423.7,748.6 L423.4,747.8 L423.2,747.1 L422.9,746.3 L422.7,745.5 L422.5,744.8 L422.2,744.0 L422.0,743.2 L421.7,742.4 L421.4,741.6 L421.2,740.9 L420.9,740.1 L420.7,739.3 L420.4,738.5 L420.2,737.7 L419.9,736.9 L419.6,736.0 L419.4,735.2 L419.1,734.4 L418.8,733.6 L418.5,732.7 L418.3,731.9 L418.0,731.1 L417.7,730.2 L417.4,729.4 L417.1,728.5 L416.9,727.6 L416.6,726.8 L416.3,725.9 L416.0,725.0 L415.7,724.2 L415.4,723.3 L415.1,722.4 L414.8,721.5 L414.5,720.6 L414.2,719.7 L413.9,718.8 L413.6,717.8 L413.3,716.9 L412.9,716.0 L412.6,715.1 L412.3,714.1 L412.0,713.2 L411.7,712.2 L411.3,711.3 L411.0,710.3 L410.7,709.4 L410.3,708.4 L410.0,707.4 L409.6,706.4 L409.3,705.4 L408.9,704.4 L408.6,703.4 L408.2,702.4 L407.9,701.4 L407.5,700.4 L407.1,699.3 L406.8,698.3 L406.4,697.3 L406.0,696.2 L405.6,695.2 L405.3,694.1 L404.9,693.0 L404.5,692.0 L404.1,690.9 L403.7,689.8 L403.3,688.7 L402.9,687.6 L402.5,686.5 L402.0,685.3 L401.6,684.2 L401.2,683.1 L400.8,681.9 L400.3,680.8 L399.9,679.6 L399.4,678.5 L399.0,677.3 L398.5,676.1 L398.1,674.9 L397.6,673.7 L397.2,672.5 L396.7,671.3 L396.2,670.0 L395.7,668.8 L395.2,667.6 L394.7,666.3 L394.2,665.0 L393.7,663.8 L393.2,662.5 L392.7,661.2 L392.2,659.9 L391.6,658.6 L391.1,657.3 L390.6,655.9 L390.0,654.6 L389.4,653.2 L388.9,651.9 L388.3,650.5 L387.7,649.1 L387.2,647.7 L386.6,646.3 L386.0,644.9 L385.4,643.4 L384.7,642.0 L384.1,640.5 L383.5,639.1 L382.9,637.6 L382.2,636.1 L381.6,634.6 L380.9,633.1 L380.2,631.5 L379.6,630.0 L378.9,628.4 L378.2,626.8 L377.5,625.3 L376.8,623.6 L376.1,622.0 L375.3,620.4 L374.6,618.8 L373.9,617.1 L373.1,615.4 L372.4,613.7 L371.6,612.0 L370.8,610.3 L370.0,608.6 L369.2,606.8 L368.4,605.0 L367.6,603.2 L366.8,601.4 L365.9,599.6 L365.1,597.7 L364.2,595.9 L363.4,594.0 L362.5,592.1 L361.6,590.2 L360.7,588.2 L359.8,586.3 L358.9,584.3 L358.0,582.3 L357.1,580.2 L356.1,578.2 L355.2,576.1 L354.2,574.0 L353.3,571.9 L352.3,569.8 L351.3,567.6 L350.3,565.4 L349.3,563.2 L348.3,560.9 L347.3,558.7 L346.3,556.4 L345.2,554.1 L344.2,551.7 L343.2,549.3 L342.1,546.9 L341.1,544.5 L340.0,542.0 L338.9,539.5 L337.9,537.0 L336.8,534.4 L335.7,531.8 L334.6,529.2 L333.5,526.5 L332.4,523.8 L331.3,521.1 L330.2,518.3 L329.1,515.4 L328.0,512.6 L326.9,509.7 L325.8,506.7 L324.7,503.8 L323.6,500.7 L322.5,497.7 L321.5,494.5 L320.4,491.4 L319.3,488.1 L318.2,484.9 L317.1,481.5 L316.1,478.2 L315.0,474.7 L314.0,471.2 L313.0,467.7 L311.9,464.1 L310.9,460.4 L309.9,456.7 L309.0,452.9 L308.0,449.0 L307.1,445.1 L306.1,441.1 L305.2,437.0 L304.3,432.8 L303.5,428.6 L302.7,424.3 L301.9,419.9 L301.1,415.4 L300.4,410.8 L299.6,406.1 L299.0,401.3 L298.3,396.4 L297.8,391.4 L297.2,386.3 L296.7,381.1 L296.3,375.7 L295.9,370.2 L295.5,364.6 L295.2,358.9 L295.0,353.0 L294.9,347.0 L294.8,340.8 L294.8,334.4 L294.9,327.9 L295.0,321.2 L295.3,314.3 L295.6,307.3 L296.1,300.0 L296.7,292.5 L297.4,284.7 L298.2,276.7 L299.2,268.5 L300.3,260.0 L301.6,251.2 L303.0,242.1 L304.6,232.6 L306.5,222.9 L308.5,212.7 L310.8,202.2 L313.4,191.2 L316.2,179.8 L319.3,167.9 L322.7,155.5 L326.5,142.6 L330.7,129.0 L335.3,114.8 L340.4,99.8 L346.1,84.1 L352.3,67.5 L359.1,50.0 M483.2,758.7 L483.1,758.0 L483.0,757.3 L482.9,756.6 L482.8,755.9 L482.7,755.2 L482.7,754.5 L482.6,753.7 L482.5,753.0 L482.4,752.3 L482.3,751.5 L482.2,750.8 L482.1,750.1 L482.0,749.3 L481.9,748.6 L481.8,747.8 L481.8,747.1 L481.7,746.3 L481.6,745.5 L481.5,744.8 L481.4,744.0 L481.3,743.2 L481.2,742.4 L481.1,741.6 L481.0,740.9 L480.9,740.1 L480.8,739.3 L480.7,738.5 L480.7,737.7 L480.6,736.9 L480.5,736.0 L480.4,735.2 L480.3,734.4 L480.2,733.6 L480.1,732.7 L480.0,731.9 L479.9,731.1 L479.8,730.2 L479.7,729.4 L479.6,728.5 L479.5,727.6 L479.4,726.8 L479.4,725.9 L479.3,725.0 L479.2,724.2 L479.1,723.3 L479.0,722.4 L478.9,721.5 L478.8,720.6 L478.7,719.7 L478.6,718.8 L478.5,717.8 L478.4,716.9 L478.3,716.0 L478.2,715.1 L478.1,714.1 L478.0,713.2 L477.9,712.2 L477.8,711.3 L477.7,710.3 L477.6,709.4 L477.5,708.4 L477.4,707.4 L477.3,706.4 L477.2,705.4 L477.1,704.4 L477.0,703.4 L476.9,702.4 L476.8,701.4 L476.7,700.4 L476.6,699.3 L476.5,698.3 L476.4,697.3 L476.3,696.2 L476.1,695.2 L476.0,694.1 L475.9,693.0 L475.8,692.0 L475.7,690.9 L475.6,689.8 L475.5,688.7 L475.4,687.6 L475.2,686.5 L475.1,685.3 L475.0,684.2 L474.9,683.1 L474.8,681.9 L474.7,680.8 L474.5,679.6 L474.4,678.5 L474.3,677.3 L474.2,676.1 L474.0,674.9 L473.9,673.7 L473.8,672.5 L473.7,671.3 L473.5,670.0 L473.4,668.8 L473.3,667.6 L473.1,666.3 L473.0,665.0 L472.8,663.8 L472.7,662.5 L472.6,661.2 L472.4,659.9 L472.3,658.6 L472.1,657.3 L472.0,655.9 L471.8,654.6 L471.7,653.2 L471.5,651.9 L471.3,650.5 L471.2,649.1 L471.0,647.7 L470.9,646.3 L470.7,644.9 L470.5,643.4 L470.3,642.0 L470.2,640.5 L470.0,639.1 L469.8,637.6 L469.6,636.1 L469.4,634.6 L469.2,633.1 L469.0,631.5 L468.8,630.0 L468.6,628.4 L468.4,626.8 L468.2,625.3 L468.0,623.6 L467.8,622.0 L467.6,620.4 L467.3,618.8 L467.1,617.1 L466.9,615.4 L466.6,613.7 L466.4,612.0 L466.1,610.3 L465.9,608.6 L465.6,606.8 L465.4,605.0 L465.1,603.2 L464.8,601.4 L464.5,599.6 L464.3,597.7 L464.0,595.9 L463.7,594.0 L463.3,592.1 L463.0,590.2 L462.7,588.2 L462.4,586.3 L462.0,584.3 L461.7,582.3 L461.4,580.2 L461.0,578.2 L460.6,576.1 L460.2,574.0 L459.9,571.9 L459.5,569.8 L459.1,567.6 L458.6,565.4 L458.2,563.2 L457.8,560.9 L457.3,558.7 L456.9,556.4 L456.4,554.1 L455.9,551.7 L455.4,549.3 L454.9,546.9 L454.4,544.5 L453.9,542.0 L453.4,539.5 L452.8,537.0 L452.3,534.4 L451.7,531.8 L451.1,529.2 L450.5,526.5 L449.9,523.8 L449.2,521.1 L448.6,518.3 L447.9,515.4 L447.3,512.6 L446.6,509.7 L445.9,506.7 L445.1,503.8 L444.4,500.7 L443.7,497.7 L442.9,494.5 L442.1,491.4 L441.3,488.1 L440.5,484.9 L439.7,481.5 L438.9,478.2 L438.0,474.7 L437.2,471.2 L436.3,467.7 L435.4,464.1 L434.5,460.4 L433.6,456.7 L432.7,452.9 L431.8,449.0 L430.9,445.1 L429.9,441.1 L429.0,437.0 L428.1,432.8 L427.1,428.6 L426.2,424.3 L425.2,419.9 L424.3,415.4 L423.4,410.8 L422.4,406.1 L421.5,401.3 L420.6,396.4 L419.8,391.4 L418.9,386.3 L418.1,381.1 L417.2,375.7 L416.5,370.2 L415.7,364.6 L415.0,358.9 L414.3,353.0 L413.7,347.0 L413.1,340.8 L412.6,334.4 L412.1,327.9 L411.7,321.2 L411.4,314.3 L411.2,307.3 L411.0,300.0 L411.0,292.5 L411.0,284.7 L411.1,276.7 L411.4,268.5 L411.8,260.0 L412.4,251.2 L413.1,242.1 L413.9,232.6 L415.0,222.9 L416.2,212.7 L417.7,202.2 L419.4,191.2 L421.3,179.8 L423.6,167.9 L426.1,155.5 L429.0,142.6 L432.2,129.0 L435.9,114.8 L440.0,99.8 L444.6,84.1 L449.7,67.5 L455.5,50.0 M540.4,758.7 L540.4,758.0 L540.4,757.3 L540.4,756.6 L540.5,755.9 L540.5,755.2 L540.5,754.5 L540.5,753.7 L540.5,753.0 L540.5,752.3 L540.6,751.5 L540.6,750.8 L540.6,750.1 L540.6,749.3 L540.6,748.6 L540.7,747.8 L540.7,747.1 L540.7,746.3 L540.7,745.5 L540.8,744.8 L540.8,744.0 L540.8,743.2 L540.8,742.4 L540.9,741.6 L540.9,740.9 L540.9,740.1 L541.0,739.3 L541.0,738.5 L541.0,737.7 L541.1,736.9 L541.1,736.0 L541.1,735.2 L541.2,734.4 L541.2,733.6 L541.3,732.7 L541.3,731.9 L541.4,731.1 L541.4,730.2 L541.4,729.4 L541.5,728.5 L541.5,727.6 L541.6,726.8 L541.6,725.9 L541.7,725.0 L541.7,724.2 L541.8,723.3 L541.8,722.4 L541.9,721.5 L542.0,720.6 L542.0,719.7 L542.1,718.8 L542.1,717.8 L542.2,716.9 L542.3,716.0 L542.3,715.1 L542.4,714.1 L542.5,713.2 L542.5,712.2 L542.6,711.3 L542.7,710.3 L542.8,709.4 L542.8,708.4 L542.9,707.4 L543.0,706.4 L543.1,705.4 L543.1,704.4 L543.2,703.4 L543.3,702.4 L543.4,701.4 L543.5,700.4 L543.6,699.3 L543.6,698.3 L543.7,697.3 L543.8,696.2 L543.9,695.2 L544.0,694.1 L544.1,693.0 L544.2,692.0 L544.3,690.9 L544.4,689.8 L544.5,688.7 L544.6,687.6 L544.7,686.5 L544.8,685.3 L545.0,684.2 L545.1,683.1 L545.2,681.9 L545.3,680.8 L545.4,679.6 L545.5,678.5 L545.7,677.3 L545.8,676.1 L545.9,674.9 L546.0,673.7 L546.2,672.5 L546.3,671.3 L546.4,670.0 L546.6,668.8 L546.7,667.6 L546.8,666.3 L547.0,665.0 L547.1,663.8 L547.3,662.5 L547.4,661.2 L547.6,659.9 L547.7,658.6 L547.9,657.3 L548.0,655.9 L548.2,654.6 L548.4,653.2 L548.5,651.9 L548.7,650.5 L548.9,649.1 L549.0,647.7 L549.2,646.3 L549.4,644.9 L549.6,643.4 L549.7,642.0 L549.9,640.5 L550.1,639.1 L550.3,637.6 L550.5,636.1 L550.7,634.6 L550.9,633.1 L551.1,631.5 L551.3,630.0 L551.5,628.4 L551.7,626.8 L551.9,625.3 L552.1,623.6 L552.3,622.0 L552.5,620.4 L552.8,618.8 L553.0,617.1 L553.2,615.4 L553.5,613.7 L553.7,612.0 L553.9,610.3 L554.2,608.6 L554.4,606.8 L554.7,605.0 L554.9,603.2 L555.2,601.4 L555.4,599.6 L555.7,597.7 L555.9,595.9 L556.2,594.0 L556.5,592.1 L556.8,590.2 L557.0,588.2 L557.3,586.3 L557.6,584.3 L557.9,582.3 L558.2,580.2 L558.5,578.2 L558.8,576.1 L559.1,574.0 L559.4,571.9 L559.7,569.8 L560.0,567.6 L560.3,565.4 L560.6,563.2 L561.0,560.9 L561.3,558.7 L561.6,556.4 L562.0,554.1 L562.3,551.7 L562.6,549.3 L563.0,546.9 L563.3,544.5 L563.7,542.0 L564.0,539.5 L564.4,537.0 L564.8,534.4 L565.1,531.8 L565.5,529.2 L565.9,526.5 L566.3,523.8 L566.6,521.1 L567.0,518.3 L567.4,515.4 L567.8,512.6 L568.2,509.7 L568.6,506.7 L569.0,503.8 L569.4,500.7 L569.8,497.7 L570.2,494.5 L570.6,491.4 L571.0,488.1 L571.4,484.9 L571.8,481.5 L572.2,478.2 L572.7,474.7 L573.1,471.2 L573.5,467.7 L573.9,464.1 L574.3,460.4 L574.7,456.7 L575.1,452.9 L575.6,449.0 L576.0,445.1 L576.4,441.1 L576.8,437.0 L577.2,432.8 L577.6,428.6 L578.0,424.3 L578.3,419.9 L578.7,415.4 L579.1,410.8 L579.4,406.1 L579.8,401.3 L580.1,396.4 L580.5,391.4 L580.8,386.3 L581.1,381.1 L581.4,375.7 L581.7,370.2 L582.0,364.6 L582.2,358.9 L582.5,353.0 L582.7,347.0 L582.9,340.8 L583.2,334.4 L583.4,327.9 L583.5,321.2 L583.7,314.3 L583.9,307.3 L584.1,300.0 L584.3,292.5 L584.5,284.7 L584.7,276.7 L584.9,268.5 L585.2,260.0 L585.5,251.2 L585.8,242.1 L586.3,232.6 L586.8,222.9 L587.4,212.7 L588.1,202.2 L588.9,191.2 L590.0,179.8 L591.2,167.9 L592.6,155.5 L594.3,142.6 L596.2,129.0 L598.5,114.8 L601.2,99.8 L604.3,84.1 L607.8,67.5 L611.9,50.0 M598.6,758.7 L598.7,758.0 L598.7,757.3 L598.8,756.6 L598.9,755.9 L599.0,755.2 L599.1,754.5 L599.2,753.7 L599.2,753.0 L599.3,752.3 L599.4,751.5 L599.5,750.8 L599.6,750.1 L599.7,749.3 L599.8,748.6 L599.9,747.8 L600.0,747.1 L600.1,746.3 L600.2,745.5 L600.3,744.8 L600.4,744.0 L600.5,743.2 L600.6,742.4 L600.7,741.6 L600.8,740.9 L600.9,740.1 L601.0,739.3 L601.2,738.5 L601.3,737.7 L601.4,736.9 L601.5,736.0 L601.6,735.2 L601.8,734.4 L601.9,733.6 L602.0,732.7 L602.1,731.9 L602.3,731.1 L602.4,730.2 L602.5,729.4 L602.7,728.5 L602.8,727.6 L603.0,726.8 L603.1,725.9 L603.2,725.0 L603.4,724.2 L603.5,723.3 L603.7,722.4 L603.8,721.5 L604.0,720.6 L604.1,719.7 L604.3,718.8 L604.5,717.8 L604.6,716.9 L604.8,716.0 L605.0,715.1 L605.1,714.1 L605.3,713.2 L605.5,712.2 L605.7,711.3 L605.8,710.3 L606.0,709.4 L606.2,708.4 L606.4,707.4 L606.6,706.4 L606.8,705.4 L607.0,704.4 L607.2,703.4 L607.4,702.4 L607.6,701.4 L607.8,700.4 L608.0,699.3 L608.2,698.3 L608.4,697.3 L608.6,696.2 L608.8,695.2 L609.0,694.1 L609.3,693.0 L609.5,692.0 L609.7,690.9 L610.0,689.8 L610.2,688.7 L610.4,687.6 L610.7,686.5 L610.9,685.3 L611.2,684.2 L611.4,683.1 L611.7,681.9 L611.9,680.8 L612.2,679.6 L612.5,678.5 L612.7,677.3 L613.0,676.1 L613.3,674.9 L613.6,673.7 L613.8,672.5 L614.1,671.3 L614.4,670.0 L614.7,668.8 L615.0,667.6 L615.3,666.3 L615.6,665.0 L615.9,663.8 L616.2,662.5 L616.6,661.2 L616.9,659.9 L617.2,658.6 L617.6,657.3 L617.9,655.9 L618.2,654.6 L618.6,653.2 L618.9,651.9 L619.3,650.5 L619.7,649.1 L620.0,647.7 L620.4,646.3 L620.8,644.9 L621.1,643.4 L621.5,642.0 L621.9,640.5 L622.3,639.1 L622.7,637.6 L623.1,636.1 L623.6,634.6 L624.0,633.1 L624.4,631.5 L624.8,630.0 L625.3,628.4 L625.7,626.8 L626.2,625.3 L626.6,623.6 L627.1,622.0 L627.6,620.4 L628.0,618.8 L628.5,617.1 L629.0,615.4 L629.5,613.7 L630.0,612.0 L630.5,610.3 L631.1,608.6 L631.6,606.8 L632.1,605.0 L632.7,603.2 L633.2,601.4 L633.8,599.6 L634.4,597.7 L634.9,595.9 L635.5,594.0 L636.1,592.1 L636.7,590.2 L637.3,588.2 L638.0,586.3 L638.6,584.3 L639.2,582.3 L639.9,580.2 L640.6,578.2 L641.2,576.1 L641.9,574.0 L642.6,571.9 L643.3,569.8 L644.1,567.6 L644.8,565.4 L645.5,563.2 L646.3,560.9 L647.1,558.7 L647.8,556.4 L648.6,554.1 L649.4,551.7 L650.3,549.3 L651.1,546.9 L652.0,544.5 L652.8,542.0 L653.7,539.5 L654.6,537.0 L655.5,534.4 L656.4,531.8 L657.4,529.2 L658.4,526.5 L659.3,523.8 L660.3,521.1 L661.4,518.3 L662.4,515.4 L663.4,512.6 L664.5,509.7 L665.6,506.7 L666.7,503.8 L667.9,500.7 L669.0,497.7 L670.2,494.5 L671.4,491.4 L672.7,488.1 L673.9,484.9 L675.2,481.5 L676.5,478.2 L677.8,474.7 L679.2,471.2 L680.6,467.7 L682.0,464.1 L683.5,460.4 L684.9,456.7 L686.5,452.9 L688.0,449.0 L689.6,445.1 L691.2,441.1 L692.9,437.0 L694.5,432.8 L696.3,428.6 L698.1,424.3 L699.9,419.9 L701.7,415.4 L703.6,410.8 L705.6,406.1 L707.6,401.3 L709.6,396.4 L711.7,391.4 L713.9,386.3 L716.1,381.1 L718.3,375.7 L720.7,370.2 L723.1,364.6 L725.5,358.9 L728.0,353.0 L730.6,347.0 L733.3,340.8 L736.0,334.4 L738.8,327.9 L741.7,321.2 L744.7,314.3 L747.8,307.3 L751.0,300.0 L754.2,292.5 L757.6,284.7 L761.1,276.7 L764.6,268.5 L768.3,260.0 L772.2,251.2 L776.1,242.1 L780.2,232.6 L784.4,222.9 L788.8,212.7 L793.3,202.2 L797.9,191.2 L802.8,179.8 L807.8,167.9 L812.9,155.5 L818.3,142.6 L823.9,129.0 L829.7,114.8 L835.6,99.8 L841.9,84.1 L848.3,67.5 L855.0,50.0 M657.6,758.7 L657.7,758.0 L657.8,757.3 L657.9,756.6 L658.0,755.9 L658.2,755.2 L658.3,754.5 L658.4,753.7 L658.5,753.0 L658.7,752.3 L658.8,751.5 L658.9,750.8 L659.0,750.1 L659.2,749.3 L659.3,748.6 L659.5,747.8 L659.6,747.1 L659.7,746.3 L659.9,745.5 L660.0,744.8 L660.2,744.0 L660.3,743.2 L660.5,742.4 L660.6,741.6 L660.8,740.9 L660.9,740.1 L661.1,739.3 L661.3,738.5 L661.4,737.7 L661.6,736.9 L661.7,736.0 L661.9,735.2 L662.1,734.4 L662.3,733.6 L662.4,732.7 L662.6,731.9 L662.8,731.1 L663.0,730.2 L663.2,729.4 L663.3,728.5 L663.5,727.6 L663.7,726.8 L663.9,725.9 L664.1,725.0 L664.3,724.2 L664.5,723.3 L664.7,722.4 L664.9,721.5 L665.1,720.6 L665.3,719.7 L665.5,718.8 L665.7,717.8 L666.0,716.9 L666.2,716.0 L666.4,715.1 L666.6,714.1 L666.9,713.2 L667.1,712.2 L667.3,711.3 L667.6,710.3 L667.8,709.4 L668.0,708.4 L668.3,707.4 L668.5,706.4 L668.8,705.4 L669.0,704.4 L669.3,703.4 L669.6,702.4 L669.8,701.4 L670.1,700.4 L670.4,699.3 L670.6,698.3 L670.9,697.3 L671.2,696.2 L671.5,695.2 L671.8,694.1 L672.1,693.0 L672.4,692.0 L672.7,690.9 L673.0,689.8 L673.3,688.7 L673.6,687.6 L673.9,686.5 L674.2,685.3 L674.5,684.2 L674.8,683.1 L675.2,681.9 L675.5,680.8 L675.8,679.6 L676.2,678.5 L676.5,677.3 L676.9,676.1 L677.2,674.9 L677.6,673.7 L678.0,672.5 L678.3,671.3 L678.7,670.0 L679.1,668.8 L679.5,667.6 L679.8,666.3 L680.2,665.0 L680.6,663.8 L681.0,662.5 L681.4,661.2 L681.9,659.9 L682.3,658.6 L682.7,657.3 L683.1,655.9 L683.6,654.6 L684.0,653.2 L684.4,651.9 L684.9,650.5 L685.4,649.1 L685.8,647.7 L686.3,646.3 L686.8,644.9 L687.2,643.4 L687.7,642.0 L688.2,640.5 L688.7,639.1 L689.2,637.6 L689.8,636.1 L690.3,634.6 L690.8,633.1 L691.4,631.5 L691.9,630.0 L692.5,628.4 L693.0,626.8 L693.6,625.3 L694.2,623.6 L694.7,622.0 L695.3,620.4 L695.9,618.8 L696.5,617.1 L697.2,615.4 L697.8,613.7 L698.4,612.0 L699.1,610.3 L699.7,608.6 L700.4,606.8 L701.1,605.0 L701.8,603.2 L702.4,601.4 L703.2,599.6 L703.9,597.7 L704.6,595.9 L705.3,594.0 L706.1,592.1 L706.8,590.2 L707.6,588.2 L708.4,586.3 L709.2,584.3 L710.0,582.3 L710.8,580.2 L711.7,578.2 L712.5,576.1 L713.4,574.0 L714.2,571.9 L715.1,569.8 L716.0,567.6 L716.9,565.4 L717.9,563.2 L718.8,560.9 L719.8,558.7 L720.8,556.4 L721.8,554.1 L722.8,551.7 L723.8,549.3 L724.9,546.9 L725.9,544.5 L727.0,542.0 L728.1,539.5 L729.3,537.0 L730.4,534.4 L731.6,531.8 L732.8,529.2 L734.0,526.5 L735.2,523.8 L736.5,521.1 L737.8,518.3 L739.1,515.4 L740.4,512.6 L741.7,509.7 L743.1,506.7 L744.5,503.8 L746.0,500.7 L747.4,497.7 L748.9,494.5 L750.5,491.4 L752.0,488.1 L753.6,484.9 L755.2,481.5 L756.9,478.2 L758.6,474.7 L760.3,471.2 L762.1,467.7 L763.9,464.1 L765.7,460.4 L767.6,456.7 L769.6,452.9 L771.6,449.0 L773.6,445.1 L775.7,441.1 L777.8,437.0 L780.0,432.8 L782.2,428.6 L784.5,424.3 L786.8,419.9 L789.2,415.4 L791.7,410.8 L794.2,406.1 L796.8,401.3 L799.5,396.4 L802.2,391.4 L805.0,386.3 L807.9,381.1 L810.9,375.7 L814.0,370.2 L817.1,364.6 L820.4,358.9 L823.7,353.0 L827.2,347.0 L830.7,340.8 L834.4,334.4 L838.2,327.9 L842.1,321.2 L846.2,314.3 L850.4,307.3 L854.7,300.0 L859.2,292.5 L863.9,284.7 L868.7,276.7 L873.8,268.5 L879.0,260.0 L884.4,251.2 L890.1,242.1 L895.9,232.6 L902.1,222.9 L908.5,212.7 L915.2,202.2 L922.2,191.2 L929.5,179.8 L937.2,167.9 L945.3,155.5 L953.8,142.6 L962.7,129.0 L972.2,114.8 L982.1,99.8 L992.7,84.1 L1003.9,67.5 L1015.8,50.0" stroke="#000090" stroke-width="1" fill="none" shape-rendering="crispEdges"/>
<rect x="61" y="50" width="600" height="699" fill="url(#iso)" shape-rendering="crispEdges"/>
</g>
<path d="M56,50.5 H667 M56,449.5 H667 M56,529.5 H667 M56,586.5 H667 M56,630.5 H667 M56,665.5 H667 M56,694.5 H667 M56,719.5 H667 M56,740.5 H667" stroke="#fff" fill="none" shape-rendering="crispEdges"/>
<line x1="61" y1="696.5" x2="626" y2="696.5" stroke="#ff00ff" shape-rendering="crispEdges"/>
<path d="M61.5,50 V756 M661.5,50 V756 M61,749.5 H662" stroke="#fff" fill="none" shape-rendering="crispEdges"/>
<path d="M61.5,749 V756 M121.5,749 V756 M181.5,749 V756 M241.5,749 V756 M301.5,749 V756 M361.5,749 V756 M421.5,749 V756 M481.5,749 V756 M541.5,749 V756 M601.5,749 V756 M661.5,749 V756" stroke="#fff" fill="none" shape-rendering="crispEdges"/>
<g clip-path="url(#pc)" fill="none" stroke-linejoin="round" shape-rendering="crispEdges">
<polyline points="61,648.5 116,666 63,671 82,683 86,695.5 84,705.5 91,712.5 137,720 180.5,726.5" stroke="#ff8000" stroke-width="1.3"/>
<polyline points="61,648 81,665.5 175.6,670.6 347.4,683 581,694.4 700,703" stroke="#ffff00" stroke-width="1.3"/>
<polyline points="211.5,726 215,720 216.5,713.5 220,705.5 229.5,702.5 246.5,696 249.5,683.5 256.5,677.5 264.5,670.5 267.5,666 280,649.5" stroke="#c8c800" stroke-width="1"/>
<polyline points="110,50 199,218.6 349.4,320.4 368,394 349.5,448 349.5,493.5 313,529.4 259.4,560.4 283,586.6 253,611 187.4,630 145.4,648 115,669.5 91.5,683 79,695.5 73.5,705 79.5,713.5 84.5,719.5 97.5,726.5" stroke="#00ff00" stroke-width="1"/>
<polyline points="121,50 123.6,218.6 292,320.6 297,394.6 272.5,448 270.5,493.5 234.4,529.4 186.4,560.4 210.6,586.6 186,611 127.4,630.4 123,635.5 110.5,654 110.5,665 115,669.5 119.5,683.5 139,695.5 141.5,705.5 147.5,713 156.5,719.5 168,726" stroke="#ff0080" stroke-width="1"/>
<polyline points="517.5,50 512.4,65.8 508,80.4 503.6,97.4 500,120 496,140 492,160 489,180 487,195 483.5,230 483,250 483.5,290 484.5,313 488,355 491.5,385 493.5,400 500,450 504.5,495 508,528 509.5,600 508.5,660 508.5,686 566,726.5" stroke="#ffb0ff" stroke-width="1"/>
<polyline points="504,50 499.2,64 496,78.5 491,95.5 488,106 480,146 473,196 470,230 469,290 470.5,322 476.5,370 479.5,400 485,438 493,494 498,528 501,590 502.5,660 502.5,696.5" stroke="#ff00ff" stroke-width="1"/>
<polyline points="502.5,696.5 484.5,726.5" stroke="#ff00ff" stroke-width="1"/>
<polyline points="502.5,696.5 544.5,726" stroke="#ff00ff" stroke-width="1"/>
<polyline points="567,50 417,218 417,270 416,322 404,394 378,449 396,494 380,529 392,561 427,585 426.6,610 428,630 432.5,648.5 446.5,665.5 457.5,670.5 471.5,683.5 487,695 493.5,705.5 494.5,713.5 484.5,726.5" stroke="#00ffff" stroke-width="1"/>
<polyline points="706,50 551.4,218 424,321 407,394 414,449 426,494 441,529 450,560 451,610 469.5,630 473,649 493,666 498.5,670.5 505,683 516,694.5 525.5,705.5 532.5,713.5 540.5,726" stroke="#ff0000" stroke-width="1.2"/>
<path d="M549,218.5 h5 M551.5,216 v5 M422,321.5 h5 M424.5,319 v5 M405,394.5 h5 M407.5,392 v5 M424,494.5 h5 M426.5,492 v5 M448,560.5 h5 M450.5,558 v5 M449,610.5 h5 M451.5,608 v5 M471,649.5 h5 M473.5,647 v5 M491,666.5 h5 M493.5,664 v5 M496,670.5 h5 M498.5,668 v5 M503,683.5 h5 M505.5,681 v5 M524,706.5 h5 M526.5,704 v5 M530,714.5 h5 M532.5,712 v5 M538,726.5 h5 M540.5,724 v5 M565,51.5 h5 M567.5,49 v5 M415,218.5 h5 M417.5,216 v5 M402,394.5 h5 M404.5,392 v5 M394,494.5 h5 M396.5,492 v5 M390,561.5 h5 M392.5,559 v5 M425,610.5 h5 M427.5,608 v5 M430,648.5 h5 M432.5,646 v5 M444,666.5 h5 M446.5,664 v5 M456,670.5 h5 M458.5,668 v5 M470,684.5 h5 M472.5,682 v5 M485,695.5 h5 M487.5,693 v5 M492,706.5 h5 M494.5,704 v5 M492,714.5 h5 M494.5,712 v5 M482,726.5 h5 M484.5,724 v5 M197,219.5 h5 M199.5,217 v5 M347,320.5 h5 M349.5,318 v5 M366,394.5 h5 M368.5,392 v5 M348,494.5 h5 M350.5,492 v5 M311,529.5 h5 M313.5,527 v5 M257,560.5 h5 M259.5,558 v5 M281,587.5 h5 M283.5,585 v5 M251,611.5 h5 M253.5,609 v5 M185,630.5 h5 M187.5,628 v5 M143,648.5 h5 M145.5,646 v5 M113,670.5 h5 M115.5,668 v5 M90,683.5 h5 M92.5,681 v5 M72,705.5 h5 M74.5,703 v5 M78,714.5 h5 M80.5,712 v5 M82,720.5 h5 M84.5,718 v5 M96,726.5 h5 M98.5,724 v5 M122,219.5 h5 M124.5,217 v5 M290,321.5 h5 M292.5,319 v5 M295,395.5 h5 M297.5,393 v5 M268,494.5 h5 M270.5,492 v5 M232,529.5 h5 M234.5,527 v5 M184,560.5 h5 M186.5,558 v5 M209,587.5 h5 M211.5,585 v5 M184,611.5 h5 M186.5,609 v5 M125,630.5 h5 M127.5,628 v5 M118,684.5 h5 M120.5,682 v5 M137,696.5 h5 M139.5,694 v5 M140,706.5 h5 M142.5,704 v5 M146,713.5 h5 M148.5,711 v5 M154,720.5 h5 M156.5,718 v5 M166,726.5 h5 M168.5,724 v5 M79,666.5 h5 M81.5,664 v5 M174,671.5 h5 M176.5,669 v5 M345,683.5 h5 M347.5,681 v5 M579,694.5 h5 M581.5,692 v5 M61,671.5 h5 M63.5,669 v5 M80,683.5 h5 M82.5,681 v5 M84,696.5 h5 M86.5,694 v5 M82,706.5 h5 M84.5,704 v5 M89,712.5 h5 M91.5,710 v5 M135,720.5 h5 M137.5,718 v5 M178,726.5 h5 M180.5,724 v5 M210,726.5 h5 M212.5,724 v5 M213,720.5 h5 M215.5,718 v5 M214,714.5 h5 M216.5,712 v5 M218,706.5 h5 M220.5,704 v5 M244,696.5 h5 M246.5,694 v5 M248,684.5 h5 M250.5,682 v5 M262,670.5 h5 M264.5,668 v5 M266,666.5 h5 M268.5,664 v5" stroke="#fff" stroke-width="1" shape-rendering="crispEdges"/>
</g>
<rect x="226" y="698" width="8" height="8" fill="#c8c800"/>
<text x="230" y="705.5" font-size="9.5" fill="#1a1a00" text-anchor="middle">1</text>
<rect x="252" y="674" width="8" height="8" fill="#c8c800"/>
<text x="256" y="681.5" font-size="9.5" fill="#1a1a00" text-anchor="middle">2</text>
<rect x="276" y="646" width="8" height="8" fill="#c8c800"/>
<text x="280" y="653.5" font-size="9.5" fill="#1a1a00" text-anchor="middle">3</text>
<rect x="67.5" y="607.5" width="43" height="17" fill="#000" stroke="#ffff00" shape-rendering="crispEdges"/>
<text x="89" y="621" font-size="13" fill="#ffff00" text-anchor="middle" textLength="36" lengthAdjust="spacingAndGlyphs">CAPE</text>
<rect x="67.5" y="636.5" width="57" height="17" fill="#000" stroke="#ff8000" shape-rendering="crispEdges"/>
<text x="96" y="650" font-size="13" fill="#ff8000" text-anchor="middle" textLength="50" lengthAdjust="spacingAndGlyphs">CINH * 5</text>
<rect x="625.5" y="687.5" width="30" height="17" fill="#000" stroke="#ff00ff" shape-rendering="crispEdges"/>
<text x="640.5" y="701" font-size="13" fill="#ff00ff" text-anchor="middle" textLength="22" lengthAdjust="spacingAndGlyphs">LCL</text>
<text x="52.5" y="55" font-size="14" fill="#ffffff" text-anchor="end" textLength="19.799999999999997" lengthAdjust="spacingAndGlyphs">100</text>
<text x="52.5" y="326" font-size="14" fill="#ffffff" text-anchor="end" textLength="19.799999999999997" lengthAdjust="spacingAndGlyphs">200</text>
<text x="52.5" y="454" font-size="14" fill="#ffffff" text-anchor="end" textLength="19.799999999999997" lengthAdjust="spacingAndGlyphs">300</text>
<text x="52.5" y="534" font-size="14" fill="#ffffff" text-anchor="end" textLength="19.799999999999997" lengthAdjust="spacingAndGlyphs">400</text>
<text x="52.5" y="591" font-size="14" fill="#ffffff" text-anchor="end" textLength="19.799999999999997" lengthAdjust="spacingAndGlyphs">500</text>
<text x="52.5" y="635" font-size="14" fill="#ffffff" text-anchor="end" textLength="19.799999999999997" lengthAdjust="spacingAndGlyphs">600</text>
<text x="52.5" y="670" font-size="14" fill="#ffffff" text-anchor="end" textLength="19.799999999999997" lengthAdjust="spacingAndGlyphs">700</text>
<text x="52.5" y="699" font-size="14" fill="#ffffff" text-anchor="end" textLength="19.799999999999997" lengthAdjust="spacingAndGlyphs">800</text>
<text x="52.5" y="724" font-size="14" fill="#ffffff" text-anchor="end" textLength="19.799999999999997" lengthAdjust="spacingAndGlyphs">900</text>
<text x="52.5" y="745" font-size="14" fill="#ffffff" text-anchor="end" textLength="26.4" lengthAdjust="spacingAndGlyphs">1000</text>
<text x="670.6" y="55" font-size="14" fill="#ffffff" textLength="44.0" lengthAdjust="spacingAndGlyphs">16576m</text>
<text x="670.6" y="326" font-size="14" fill="#ffffff" textLength="44.0" lengthAdjust="spacingAndGlyphs">12192m</text>
<text x="670.6" y="454" font-size="14" fill="#ffffff" textLength="37.4" lengthAdjust="spacingAndGlyphs">9552m</text>
<text x="670.6" y="534" font-size="14" fill="#ffffff" textLength="37.4" lengthAdjust="spacingAndGlyphs">7513m</text>
<text x="670.6" y="591" font-size="14" fill="#ffffff" textLength="37.4" lengthAdjust="spacingAndGlyphs">5830m</text>
<text x="670.6" y="635" font-size="14" fill="#ffffff" textLength="37.4" lengthAdjust="spacingAndGlyphs">4406m</text>
<text x="670.6" y="670" font-size="14" fill="#ffffff" textLength="37.4" lengthAdjust="spacingAndGlyphs">3155m</text>
<text x="670.6" y="699" font-size="14" fill="#ffffff" textLength="37.4" lengthAdjust="spacingAndGlyphs">2048m</text>
<text x="670.6" y="724" font-size="14" fill="#ffffff" textLength="37.4" lengthAdjust="spacingAndGlyphs">1057m</text>
<text x="58.7" y="768" font-size="14" fill="#ffffff" text-anchor="middle" textLength="17.0" lengthAdjust="spacingAndGlyphs">-50</text>
<text x="118.7" y="768" font-size="14" fill="#ffffff" text-anchor="middle" textLength="17.0" lengthAdjust="spacingAndGlyphs">-40</text>
<text x="178.7" y="768" font-size="14" fill="#ffffff" text-anchor="middle" textLength="17.0" lengthAdjust="spacingAndGlyphs">-30</text>
<text x="238.7" y="768" font-size="14" fill="#ffffff" text-anchor="middle" textLength="17.0" lengthAdjust="spacingAndGlyphs">-20</text>
<text x="298.7" y="768" font-size="14" fill="#ffffff" text-anchor="middle" textLength="17.0" lengthAdjust="spacingAndGlyphs">-10</text>
<text x="361.5" y="768" font-size="14" fill="#ffffff" text-anchor="middle" textLength="6.6" lengthAdjust="spacingAndGlyphs">0</text>
<text x="421.5" y="768" font-size="14" fill="#ffffff" text-anchor="middle" textLength="13.2" lengthAdjust="spacingAndGlyphs">10</text>
<text x="481.5" y="768" font-size="14" fill="#ffffff" text-anchor="middle" textLength="13.2" lengthAdjust="spacingAndGlyphs">20</text>
<text x="541.5" y="768" font-size="14" fill="#ffffff" text-anchor="middle" textLength="13.2" lengthAdjust="spacingAndGlyphs">30</text>
<text x="601.5" y="768" font-size="14" fill="#ffffff" text-anchor="middle" textLength="13.2" lengthAdjust="spacingAndGlyphs">40</text>
<text x="661.5" y="768" font-size="14" fill="#ffffff" text-anchor="middle" textLength="13.2" lengthAdjust="spacingAndGlyphs">50</text>
<text x="276.9" y="781" font-size="13.5" fill="#ffffff" textLength="170" lengthAdjust="spacingAndGlyphs">Temperature, Dewpoint  [ °C ]</text>
<text x="61.5" y="806" font-size="14" fill="#ffffff" text-anchor="middle" textLength="6.6" lengthAdjust="spacingAndGlyphs">0</text>
<text x="121.5" y="806" font-size="14" fill="#ffffff" text-anchor="middle" textLength="13.2" lengthAdjust="spacingAndGlyphs">10</text>
<text x="181.5" y="806" font-size="14" fill="#ffffff" text-anchor="middle" textLength="13.2" lengthAdjust="spacingAndGlyphs">20</text>
<text x="241.5" y="806" font-size="14" fill="#ffffff" text-anchor="middle" textLength="13.2" lengthAdjust="spacingAndGlyphs">30</text>
<text x="301.5" y="806" font-size="14" fill="#ffffff" text-anchor="middle" textLength="13.2" lengthAdjust="spacingAndGlyphs">40</text>
<text x="361.5" y="806" font-size="14" fill="#ffffff" text-anchor="middle" textLength="13.2" lengthAdjust="spacingAndGlyphs">50</text>
<text x="421.5" y="806" font-size="14" fill="#ffffff" text-anchor="middle" textLength="13.2" lengthAdjust="spacingAndGlyphs">60</text>
<text x="481.5" y="806" font-size="14" fill="#ffffff" text-anchor="middle" textLength="13.2" lengthAdjust="spacingAndGlyphs">70</text>
<text x="541.5" y="806" font-size="14" fill="#ffffff" text-anchor="middle" textLength="13.2" lengthAdjust="spacingAndGlyphs">80</text>
<text x="601.5" y="806" font-size="14" fill="#ffffff" text-anchor="middle" textLength="13.2" lengthAdjust="spacingAndGlyphs">90</text>
<text x="661.5" y="806" font-size="14" fill="#ffffff" text-anchor="middle" textLength="19.799999999999997" lengthAdjust="spacingAndGlyphs">100</text>
<text x="307.2" y="819" font-size="13.5" fill="#ffffff" textLength="106" lengthAdjust="spacingAndGlyphs">Windspeed  [ knt ]</text>
<text x="61.5" y="843" font-size="14" fill="#ffffff" text-anchor="middle" textLength="6.6" lengthAdjust="spacingAndGlyphs">0</text>
<text x="121.5" y="843" font-size="14" fill="#ffffff" text-anchor="middle" textLength="19.799999999999997" lengthAdjust="spacingAndGlyphs">300</text>
<text x="181.5" y="843" font-size="14" fill="#ffffff" text-anchor="middle" textLength="19.799999999999997" lengthAdjust="spacingAndGlyphs">600</text>
<text x="241.5" y="843" font-size="14" fill="#ffffff" text-anchor="middle" textLength="19.799999999999997" lengthAdjust="spacingAndGlyphs">900</text>
<text x="301.5" y="843" font-size="14" fill="#ffffff" text-anchor="middle" textLength="26.4" lengthAdjust="spacingAndGlyphs">1200</text>
<text x="361.5" y="843" font-size="14" fill="#ffffff" text-anchor="middle" textLength="26.4" lengthAdjust="spacingAndGlyphs">1500</text>
<text x="421.5" y="843" font-size="14" fill="#ffffff" text-anchor="middle" textLength="26.4" lengthAdjust="spacingAndGlyphs">1800</text>
<text x="481.5" y="843" font-size="14" fill="#ffffff" text-anchor="middle" textLength="26.4" lengthAdjust="spacingAndGlyphs">2100</text>
<text x="541.5" y="843" font-size="14" fill="#ffffff" text-anchor="middle" textLength="26.4" lengthAdjust="spacingAndGlyphs">2400</text>
<text x="601.5" y="843" font-size="14" fill="#ffffff" text-anchor="middle" textLength="26.4" lengthAdjust="spacingAndGlyphs">2700</text>
<text x="661.5" y="843" font-size="14" fill="#ffffff" text-anchor="middle" textLength="26.4" lengthAdjust="spacingAndGlyphs">3000</text>
<text x="293" y="857" font-size="13.5" fill="#ffffff" textLength="136.3" lengthAdjust="spacingAndGlyphs">CAPE, CINH * 5  [ J/kg ]</text>
<path d="M61.5,788 V793 M61.5,826 V831 M121.5,788 V793 M121.5,826 V831 M181.5,788 V793 M181.5,826 V831 M241.5,788 V793 M241.5,826 V831 M301.5,788 V793 M301.5,826 V831 M361.5,788 V793 M361.5,826 V831 M421.5,788 V793 M421.5,826 V831 M481.5,788 V793 M481.5,826 V831 M541.5,788 V793 M541.5,826 V831 M601.5,788 V793 M601.5,826 V831 M661.5,788 V793 M661.5,826 V831 M61.5,863 V868 M136.5,863 V868 M211.5,863 V868 M286.5,863 V868 M361.5,863 V868 M436.5,863 V868 M511.5,863 V868 M586.5,863 V868 M661.5,863 V868" stroke="#fff" fill="none" shape-rendering="crispEdges"/>
<text x="58.7" y="880" font-size="14" fill="#ffffff" text-anchor="middle" textLength="23.599999999999998" lengthAdjust="spacingAndGlyphs">-100</text>
<text x="133.7" y="880" font-size="14" fill="#ffffff" text-anchor="middle" textLength="17.0" lengthAdjust="spacingAndGlyphs">-50</text>
<text x="211.5" y="880" font-size="14" fill="#ffffff" text-anchor="middle" textLength="6.6" lengthAdjust="spacingAndGlyphs">0</text>
<text x="286.5" y="880" font-size="14" fill="#ffffff" text-anchor="middle" textLength="13.2" lengthAdjust="spacingAndGlyphs">50</text>
<text x="361.5" y="880" font-size="14" fill="#ffffff" text-anchor="middle" textLength="19.799999999999997" lengthAdjust="spacingAndGlyphs">100</text>
<text x="436.5" y="880" font-size="14" fill="#ffffff" text-anchor="middle" textLength="19.799999999999997" lengthAdjust="spacingAndGlyphs">150</text>
<text x="511.5" y="880" font-size="14" fill="#ffffff" text-anchor="middle" textLength="19.799999999999997" lengthAdjust="spacingAndGlyphs">200</text>
<text x="586.5" y="880" font-size="14" fill="#ffffff" text-anchor="middle" textLength="19.799999999999997" lengthAdjust="spacingAndGlyphs">250</text>
<text x="661.5" y="880" font-size="14" fill="#ffffff" text-anchor="middle" textLength="19.799999999999997" lengthAdjust="spacingAndGlyphs">300</text>
<text x="259.8" y="893" font-size="13.5" fill="#ffffff" textLength="203.2" lengthAdjust="spacingAndGlyphs">Storm Relative Helicity  [ m^2/s^2 ]</text>
<text x="62.6" y="29" font-size="16" fill="#ffffff" font-weight="bold" textLength="58" lengthAdjust="spacingAndGlyphs">Station:</text>
<text x="129.4" y="29" font-size="16" fill="#ffffff" font-weight="bold" textLength="89.6" lengthAdjust="spacingAndGlyphs">Schüpfheim</text>
<text x="245.8" y="29" font-size="16" fill="#ffffff" font-weight="bold" textLength="126" lengthAdjust="spacingAndGlyphs">Date: 19.06.2021</text>
<text x="396.6" y="29" font-size="16" fill="#ffffff" font-weight="bold" textLength="89.7" lengthAdjust="spacingAndGlyphs">Time: 1530Z</text>
<text x="747" y="31.6" font-size="14.5" fill="#00ff00" font-weight="bold" textLength="27.5" lengthAdjust="spacingAndGlyphs">OBS</text>
<text x="818.4" y="31.6" font-size="14.5" fill="#ff0080" font-weight="bold" textLength="17" lengthAdjust="spacingAndGlyphs">SR</text>
<line x1="761.5" y1="40" x2="761.5" y2="770" stroke="#00ff00" shape-rendering="crispEdges"/>
<line x1="826.5" y1="40" x2="826.5" y2="770" stroke="#ff0080" shape-rendering="crispEdges"/>
<path d="M761.5,218 L735.4,231.3 M761.5,321 L744,344.7 M761.5,394 L739.3,412.6 M761.5,449.6 L735.4,462.4 M761.5,493.4 L734,504.5 M761.5,529.3 L734,540.4 M761.5,560.6 L737,576.8 M761.5,586.3 L737,602.5 M761.5,610.4 L739.3,628.4 M761.5,630.3 L740.2,649.6 M761.5,648.3 L743.4,670.5 M761.5,665.4 L744.4,688 M761.5,670 L745.3,694 M761.5,683.4 L743.4,705.5 M761.5,704 L752.9,678.6 M761.5,725 L770.5,692.5 M761.5,725 L774.9,700 M761.5,725 L759.6,685 M826.5,218 L804,237.5 M826.5,321 L814.6,347.8 M826.5,394 L807,415.4 M826.5,449.6 L801,464.5 M826.5,493.4 L798.8,505.7 M826.5,529.3 L800.2,542.7 M826.5,560.6 L806.5,581.6 M826.5,586.3 L806.5,606.4 M826.5,610.4 L809.7,633.7 M826.5,630.3 L819.2,658.7 M826.5,648.3 L851.4,683.4 M826.5,665.4 L851.4,683.4 M826.5,670 L855.2,685.3 M826.5,683.4 L856,685.6 M826.5,695.7 L856,693.8 M826.5,705.2 L855.2,693.8 M826.5,713.7 L853.3,700.4 M826.5,720.3 L853.3,707 M826.5,726 L852.4,711.8" stroke="#fff" stroke-width="0.85" fill="none" shape-rendering="crispEdges"/>
<rect x="894" y="41" width="61" height="1" fill="#ffffff" shape-rendering="crispEdges"/>
<text x="894.5" y="40" font-size="13" fill="#ffffff">Parameter</text>
<rect x="1064" y="41" width="60" height="1" fill="#ffffff" shape-rendering="crispEdges"/>
<text x="1123.6" y="40" font-size="13" fill="#ffffff" text-anchor="end">Value LCL</text>
<rect x="1152" y="41" width="62" height="1" fill="#ffffff" shape-rendering="crispEdges"/>
<text x="1214" y="40" font-size="13" fill="#ffffff" text-anchor="end">Value CCL</text>
<rect x="1230" y="41" width="23" height="1" fill="#ffffff" shape-rendering="crispEdges"/>
<text x="1230" y="40" font-size="13" fill="#ffffff">Unit</text>
<text x="894.5" y="62" font-size="13" fill="#ffffff">Convective Temperature:</text>
<text x="1123.6" y="62" font-size="13" fill="#ff0000" text-anchor="end">31.61</text>
<text x="1230" y="62" font-size="13" fill="#ffffff">[°C]</text>
<text x="894.5" y="79" font-size="13" fill="#ffffff">Snowfall Height:</text>
<text x="1123.6" y="79" font-size="13" fill="#ffffff" text-anchor="end">3605.89</text>
<text x="1230" y="79" font-size="13" fill="#ffffff">[m]</text>
<text x="894.5" y="124" font-size="13" fill="#ffffff">Lifted Index:</text>
<text x="1123.6" y="124" font-size="13" fill="#ff0000" text-anchor="end">-8.35</text>
<text x="1214" y="124" font-size="13" fill="#ff0000" text-anchor="end">-9.76</text>
<text x="1230" y="124" font-size="13" fill="#ffffff">[°C]</text>
<text x="894.5" y="141" font-size="13" fill="#ffffff">CAPE ML:</text>
<text x="1123.6" y="141" font-size="13" fill="#ff0000" text-anchor="end">3381.27</text>
<text x="1214" y="141" font-size="13" fill="#ff0000" text-anchor="end">4121.81</text>
<text x="1230" y="141" font-size="13" fill="#ffffff">[J/kg]</text>
<text x="894.5" y="158" font-size="13" fill="#ffffff">CINH | LSI (LCL: 807mB):</text>
<text x="1123.6" y="158" font-size="13" fill="#ff0000" text-anchor="end">77.03</text>
<text x="1124.1" y="158" font-size="13" fill="#ffffff">,</text>
<text x="1136.4" y="158" font-size="13" fill="#ff0000">-0.29</text>
<text x="1230" y="158" font-size="13" fill="#ffffff">[J/kg], [°C]</text>
<text x="894.5" y="175" font-size="13" fill="#ffffff">CAPE SFC:</text>
<text x="1123.6" y="175" font-size="13" fill="#ff0000" text-anchor="end">3097.94</text>
<text x="1214" y="175" font-size="13" fill="#ff0000" text-anchor="end">4018.20</text>
<text x="1230" y="175" font-size="13" fill="#ffffff">[J/kg]</text>
<text x="894.5" y="192" font-size="13" fill="#ffffff">CAPE MU | CINH MU:</text>
<text x="1123.6" y="192" font-size="13" fill="#ff0000" text-anchor="end">3729.26</text>
<text x="1124.1" y="192" font-size="13" fill="#ffffff">,</text>
<text x="1136.4" y="192" font-size="13" fill="#ff0000">30.50</text>
<text x="1230" y="192" font-size="13" fill="#ffffff">[J/kg]</text>
<text x="894.5" y="209" font-size="13" fill="#ffffff">3km SFC CAPE | IL CAPE:</text>
<text x="1123.6" y="209" font-size="13" fill="#ffff00" text-anchor="end">26.70</text>
<text x="1124.1" y="209" font-size="13" fill="#ffffff">,</text>
<text x="1136.4" y="209" font-size="13" fill="#ff0000">5835.38</text>
<text x="1230" y="209" font-size="13" fill="#ffffff">[J/kg]</text>
<text x="894.5" y="226" font-size="13" fill="#ffffff">DCAPE (LFS = 550mB):</text>
<text x="1123.6" y="226" font-size="13" fill="#ff0000" text-anchor="end">559.64</text>
<text x="1230" y="226" font-size="13" fill="#ffffff">[J/kg]</text>
<text x="894.5" y="243" font-size="13" fill="#ffffff">850-600 Lapse Rate:</text>
<text x="1123.6" y="243" font-size="13" fill="#ff0000" text-anchor="end">22.50</text>
<text x="1230" y="243" font-size="13" fill="#ffffff">[°C]</text>
<text x="894.5" y="260" font-size="13" fill="#ffffff">FM Hail Size | SHIP | LHP:</text>
<text x="1123.6" y="260" font-size="13" fill="#ff0000" text-anchor="end">3.8 - 5.1</text>
<text x="1124.1" y="260" font-size="13" fill="#ffffff">,</text>
<text x="1136.4" y="260" font-size="13" fill="#ff0000">3.96</text>
<text x="1161.2" y="260" font-size="13" fill="#ffffff">,</text>
<text x="1172.2" y="260" font-size="13" fill="#ff0000">26.91</text>
<text x="1230" y="260" font-size="13" fill="#ffffff">[cm], [1], [1]</text>
<text x="894.5" y="277" font-size="13" fill="#ffffff">Estofex Exp. Hail Param:</text>
<text x="1123.6" y="277" font-size="13" fill="#ff0000" text-anchor="end">7.11</text>
<text x="1230" y="277" font-size="13" fill="#ffffff">[cm]</text>
<text x="894.5" y="294" font-size="13" fill="#ffffff">Max. Hail Size (OLD, MU, IL):</text>
<text x="1123.6" y="294" font-size="13" fill="#ff0000" text-anchor="end">4.82</text>
<text x="1124.1" y="294" font-size="13" fill="#ffffff">,</text>
<text x="1136.4" y="294" font-size="13" fill="#ff0000">7.79</text>
<text x="1161.2" y="294" font-size="13" fill="#ffffff">,</text>
<text x="1172.2" y="294" font-size="13" fill="#ff0000">18.28</text>
<text x="1230" y="294" font-size="13" fill="#ffffff">[cm]</text>
<text x="894.5" y="313.5" font-size="13" fill="#ffffff">LCL / CCL (AGL):</text>
<text x="1123.6" y="313.5" font-size="13" fill="#ffff00" text-anchor="end">1236.21</text>
<text x="1214" y="313.5" font-size="13" fill="#ffff00" text-anchor="end">1655.62</text>
<text x="1230" y="313.5" font-size="13" fill="#ffffff">[m]</text>
<text x="894.5" y="330.5" font-size="13" fill="#ffffff">Convective Height:</text>
<text x="1123.6" y="330.5" font-size="13" fill="#ff0000" text-anchor="end">10.86</text>
<text x="1214" y="330.5" font-size="13" fill="#ff0000" text-anchor="end">10.64</text>
<text x="1230" y="330.5" font-size="13" fill="#ffffff">[km]</text>
<text x="894.5" y="375.5" font-size="13" fill="#ffffff">Showalter Index:</text>
<text x="1123.6" y="375.5" font-size="13" fill="#ff0000" text-anchor="end">-8.58</text>
<text x="1230" y="375.5" font-size="13" fill="#ffffff">[°C]</text>
<text x="894.5" y="392.5" font-size="13" fill="#ffffff">Modified Thompson Index:</text>
<text x="1123.6" y="392.5" font-size="13" fill="#ff0000" text-anchor="end">54.28</text>
<text x="1230" y="392.5" font-size="13" fill="#ffffff">[°C]</text>
<text x="894.5" y="409.5" font-size="13" fill="#ffffff">Total Totals Index:</text>
<text x="1123.6" y="409.5" font-size="13" fill="#ff0000" text-anchor="end">60.24</text>
<text x="1230" y="409.5" font-size="13" fill="#ffffff">[°C]</text>
<text x="894.5" y="426.5" font-size="13" fill="#ffffff">KO Index:</text>
<text x="1123.6" y="426.5" font-size="13" fill="#ff0000" text-anchor="end">-27.36</text>
<text x="1230" y="426.5" font-size="13" fill="#ffffff">[1]</text>
<text x="894.5" y="443.5" font-size="13" fill="#ffffff">Craven SigSvr / 1000:</text>
<text x="1123.6" y="443.5" font-size="13" fill="#ff0000" text-anchor="end">68.27</text>
<text x="1230" y="443.5" font-size="13" fill="#ffffff">[m^3/s^3]</text>
<text x="894.5" y="460.5" font-size="13" fill="#ffffff">SCP RM (new, old):</text>
<text x="1123.6" y="460.5" font-size="13" fill="#ff0000" text-anchor="end">2.78</text>
<text x="1124.1" y="460.5" font-size="13" fill="#ffffff">,</text>
<text x="1136.4" y="460.5" font-size="13" fill="#ff0000">1.74</text>
<text x="1230" y="460.5" font-size="13" fill="#ffffff">[1]</text>
<text x="894.5" y="477.5" font-size="13" fill="#ffffff">STP (new, old):</text>
<text x="1123.6" y="477.5" font-size="13" fill="#ff0000" text-anchor="end">0.43</text>
<text x="1124.1" y="477.5" font-size="13" fill="#ffffff">,</text>
<text x="1136.4" y="477.5" font-size="13" fill="#ff0000">0.21</text>
<text x="1230" y="477.5" font-size="13" fill="#ffffff">[1]</text>
<text x="894.5" y="494.5" font-size="13" fill="#ffffff">SB STP (fix) | CWASP:</text>
<text x="1123.6" y="494.5" font-size="13" fill="#00ff00" text-anchor="end">0.21</text>
<text x="1124.1" y="494.5" font-size="13" fill="#ffffff">,</text>
<text x="1136.4" y="494.5" font-size="13" fill="#ffff00">58.59</text>
<text x="1230" y="494.5" font-size="13" fill="#ffffff">[1], [%]</text>
<text x="894.5" y="511.5" font-size="13" fill="#ffffff">DCP | MMP | MSP:</text>
<text x="1123.6" y="511.5" font-size="13" fill="#ff0000" text-anchor="end">1.81</text>
<text x="1124.1" y="511.5" font-size="13" fill="#ffffff">,</text>
<text x="1136.4" y="511.5" font-size="13" fill="#ff0000">97.31</text>
<text x="1168.1" y="511.5" font-size="13" fill="#ffffff">,</text>
<text x="1179.1" y="511.5" font-size="13" fill="#00ff00">50.99</text>
<text x="1230" y="511.5" font-size="13" fill="#ffffff">[1], [%], [%]</text>
<text x="894.5" y="528.5" font-size="13" fill="#ffffff">MB Comp | SHERBE:</text>
<text x="1123.6" y="528.5" font-size="13" fill="#00ff00" text-anchor="end">0.00</text>
<text x="1124.1" y="528.5" font-size="13" fill="#ffffff">,</text>
<text x="1136.4" y="528.5" font-size="13" fill="#ff0000">1.58</text>
<text x="1230" y="528.5" font-size="13" fill="#ffffff">[1], [1]</text>
<text x="894.5" y="545.5" font-size="13" fill="#ffffff">Exp. Supercell Index CH:</text>
<text x="1123.6" y="545.5" font-size="13" fill="#ff0000" text-anchor="end">6.02</text>
<text x="1230" y="545.5" font-size="13" fill="#ffffff">[1]</text>
<text x="894.5" y="562.5" font-size="13" fill="#ffffff">SWISS 12 Index:</text>
<text x="1123.6" y="562.5" font-size="13" fill="#ff0000" text-anchor="end">-11.67</text>
<text x="1230" y="562.5" font-size="13" fill="#ffffff">[1]</text>
<text x="894.5" y="579.5" font-size="13" fill="#ffffff">Precipitable Water:</text>
<text x="1123.6" y="579.5" font-size="13" fill="#ff0000" text-anchor="end">37.42</text>
<text x="1230" y="579.5" font-size="13" fill="#ffffff">[mm]</text>
<text x="894.5" y="624.5" font-size="13" fill="#ffffff">Storm Direction | Motion:</text>
<text x="1123.6" y="624.5" font-size="13" fill="#ffffff" text-anchor="end">255.67</text>
<text x="1124.1" y="624.5" font-size="13" fill="#ffffff">,</text>
<text x="1136.4" y="624.5" font-size="13" fill="#ffff00">13.35</text>
<text x="1230" y="624.5" font-size="13" fill="#ffffff">[°], [knt]</text>
<text x="894.5" y="641.5" font-size="13" fill="#ffffff">500m Critical Angle:</text>
<text x="1123.6" y="641.5" font-size="13" fill="#00ff00" text-anchor="end">11.85</text>
<text x="1230" y="641.5" font-size="13" fill="#ffffff">[°]</text>
<text x="894.5" y="661.5" font-size="13" fill="#ffffff">SR Wind Sfc-2km:</text>
<text x="1123.6" y="661.5" font-size="13" fill="#ffff00" text-anchor="end">12.94</text>
<text x="1230" y="661.5" font-size="13" fill="#ffffff">[knt]</text>
<text x="894.5" y="678.5" font-size="13" fill="#ffffff">SR Wind 4km-6km:</text>
<text x="1123.6" y="678.5" font-size="13" fill="#ff0000" text-anchor="end">21.68</text>
<text x="1230" y="678.5" font-size="13" fill="#ffffff">[knt]</text>
<text x="894.5" y="695.5" font-size="13" fill="#ffffff">SR Wind 9km-11km:</text>
<text x="1123.6" y="695.5" font-size="13" fill="#ff0000" text-anchor="end">37.46</text>
<text x="1230" y="695.5" font-size="13" fill="#ffffff">[knt] HP</text>
<text x="894.5" y="715.5" font-size="13" fill="#ffffff">Effective Shear 6000:</text>
<text x="1123.6" y="715.5" font-size="13" fill="#ff0000" text-anchor="end">39.25</text>
<text x="1230" y="715.5" font-size="13" fill="#ffffff">[knt]</text>
<text x="894.5" y="735.5" font-size="13" fill="#ffffff">Bulk Richardson Number:</text>
<text x="1123.6" y="735.5" font-size="13" fill="#ffff00" text-anchor="end">82.19</text>
<text x="1214" y="735.5" font-size="13" fill="#ffff00" text-anchor="end">100.20</text>
<text x="1230" y="735.5" font-size="13" fill="#ffffff">[1]</text>
<text x="894.5" y="755.5" font-size="13" fill="#ffffff">3km Effective SRH:</text>
<text x="1123.6" y="755.5" font-size="13" fill="#00ff00" text-anchor="end">45.36</text>
<text x="1230" y="755.5" font-size="13" fill="#ffffff">[m^2/s^2]</text>
<text x="894.5" y="772.5" font-size="13" fill="#ffffff">Max 3km SRH (0-2km) | AGL:</text>
<text x="1123.6" y="772.5" font-size="13" fill="#ff0000" text-anchor="end">106.90</text>
<text x="1124.1" y="772.5" font-size="13" fill="#ffffff">,</text>
<text x="1136.4" y="772.5" font-size="13" fill="#00ff00">2000.00</text>
<text x="1230" y="772.5" font-size="13" fill="#ffffff">[m^2/s^2], [m]</text>
<text x="894.5" y="792.5" font-size="13" fill="#ffffff">3km Energy Helicity Index:</text>
<text x="1123.6" y="792.5" font-size="13" fill="#00ff00" text-anchor="end">0.96</text>
<text x="1214" y="792.5" font-size="13" fill="#00ff00" text-anchor="end">1.17</text>
<text x="1230" y="792.5" font-size="13" fill="#ffffff">[1]</text>
<text x="894.5" y="809.5" font-size="13" fill="#ffffff">3km Vorticity Gen. Pot.:</text>
<text x="1123.6" y="809.5" font-size="13" fill="#ff0000" text-anchor="end">0.20</text>
<text x="1214" y="809.5" font-size="13" fill="#ff0000" text-anchor="end">0.22</text>
<text x="1230" y="809.5" font-size="13" fill="#ffffff">[m/s^2]</text>
<rect x="894" y="105" width="257" height="1" fill="#ffffff" shape-rendering="crispEdges"/>
<text x="894.5" y="104" font-size="13" fill="#ffffff">Parcels: Using 50mB mean layer LCL + CCL</text>
<rect x="894" y="357" width="109" height="1" fill="#ffffff" shape-rendering="crispEdges"/>
<text x="894.5" y="355.5" font-size="13" fill="#ffffff">Convective Indices</text>
<rect x="894" y="606" width="100" height="1" fill="#ffffff" shape-rendering="crispEdges"/>
<text x="894.5" y="604.5" font-size="13" fill="#ffffff">Wind Parameters</text>
<rect x="729" y="827" width="15" height="8" fill="#ff0000"/>
<text x="753.5" y="836" font-size="13" fill="#ff0000">Temperature Profile</text>
<rect x="729" y="847" width="15" height="8" fill="#00ffff"/>
<text x="753.5" y="856" font-size="13" fill="#00ffff">Dewpoint Profile</text>
<rect x="729" y="867" width="15" height="8" fill="#00ff00"/>
<text x="753.5" y="876" font-size="13" fill="#00ff00">OBS Windspeed Profile</text>
<rect x="729" y="887" width="15" height="8" fill="#ff0080"/>
<text x="753.5" y="896" font-size="13" fill="#ff0080">SR Windspeed Profile</text>
<rect x="729" y="907" width="15" height="8" fill="#c8c800"/>
<text x="753.5" y="916" font-size="13" fill="#c8c800">Sfc-3km Storm Relative Helicity Profile</text>
<rect x="729" y="927" width="15" height="8" fill="#3c3c00"/>
<text x="753.5" y="936" font-size="13" fill="#3c3c00">Effective Layer (CAPE &gt;= 100 J/kg)</text>
<rect x="1079" y="827" width="15" height="8" fill="#00ff00"/>
<text x="1103.5" y="836" font-size="13" fill="#00ff00">No / Non Severe Thunderstorms</text>
<rect x="1079" y="847" width="15" height="8" fill="#ffff00"/>
<text x="1103.5" y="856" font-size="13" fill="#ffff00">Scattered / Moderate Thunderstorms</text>
<rect x="1079" y="867" width="15" height="8" fill="#ff0000"/>
<text x="1103.5" y="876" font-size="13" fill="#ff0000">Widespread / Severe Thunderstorms</text>
</svg>
</body></html>
